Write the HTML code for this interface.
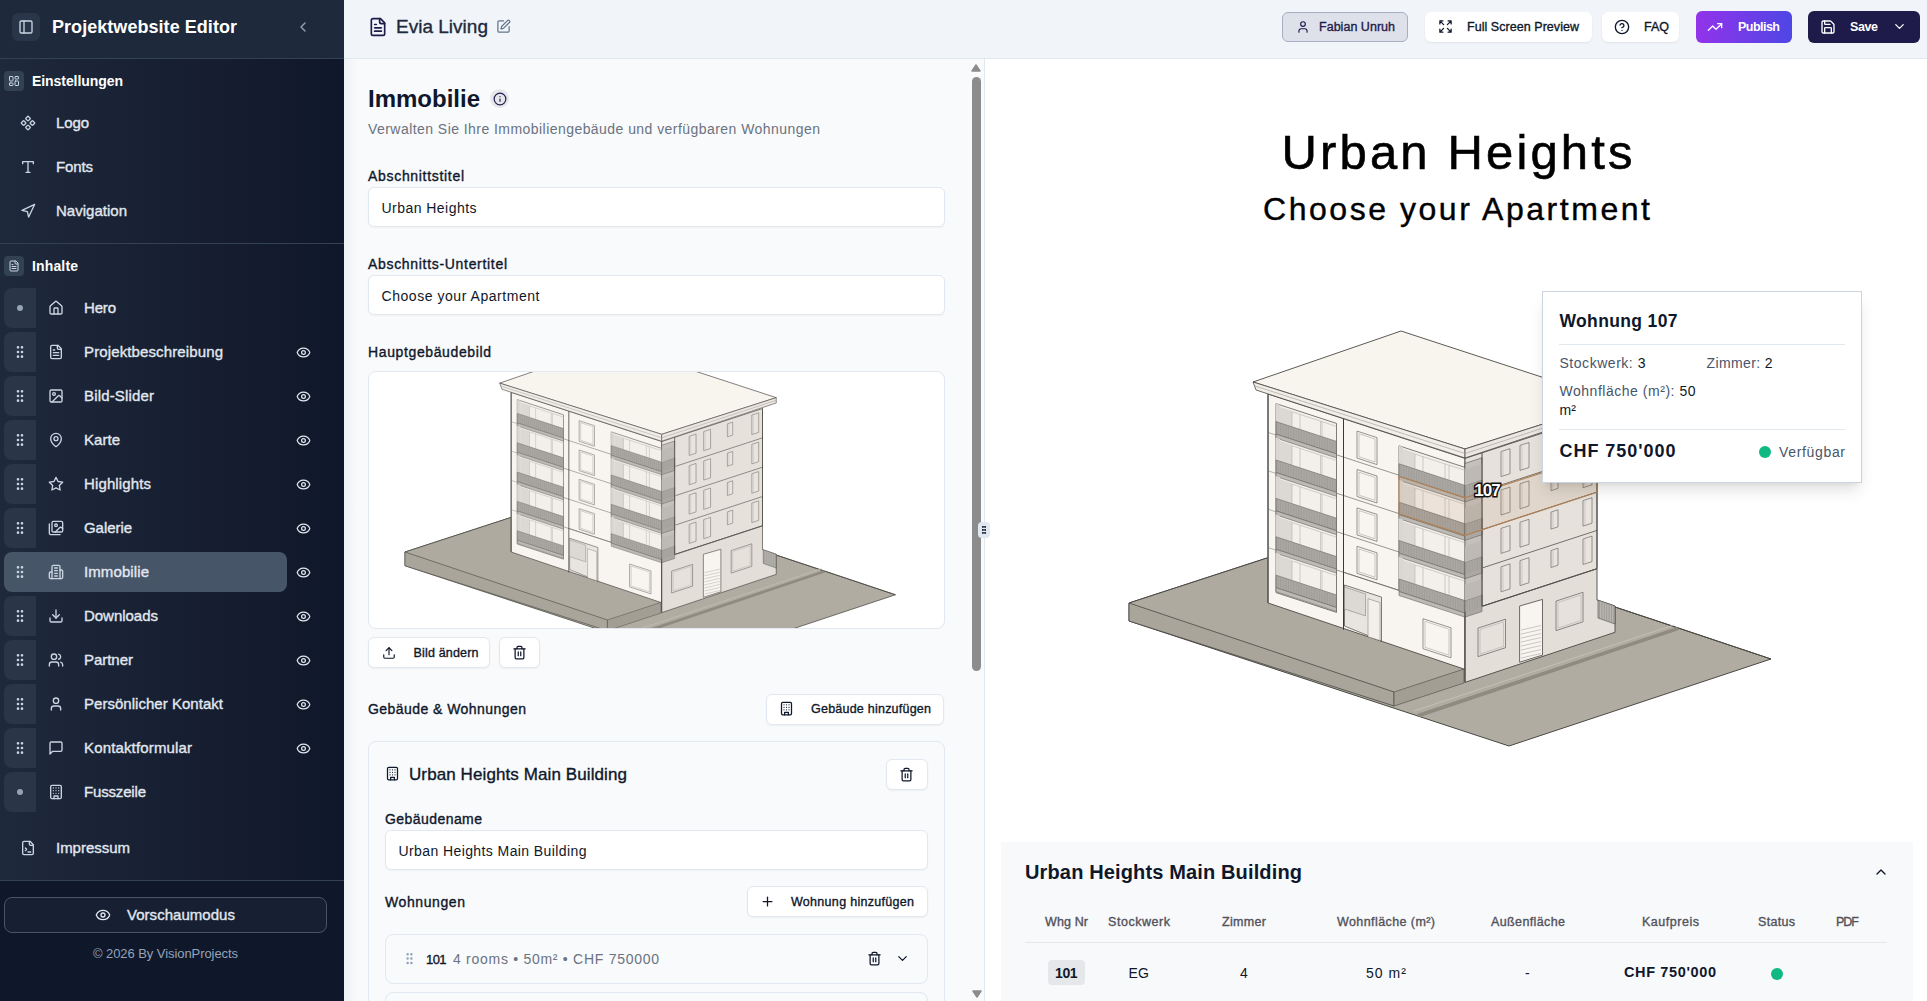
<!DOCTYPE html><html><head><meta charset="utf-8"><style>
*{box-sizing:border-box;margin:0;padding:0}
html,body{width:1927px;height:1001px;overflow:hidden;background:#fff;font-family:"Liberation Sans",sans-serif}
.t{position:absolute;white-space:nowrap}
svg{display:block}
</style></head><body>
<div style="position:absolute;left:0px;top:0px;width:344px;height:1001px;background:linear-gradient(to right,#1e293b 0%,#141c2e 70%,#0f172a 100%)"></div>
<div style="position:absolute;left:0px;top:0px;width:344px;height:59px;background:#1e293b;border-bottom:1px solid #334155"></div>
<div style="position:absolute;left:12px;top:13px;width:28px;height:28px;background:#293548;border-radius:6px"></div>
<svg style="position:absolute;left:18px;top:19px;" width="16" height="16" viewBox="0 0 24 24" fill="none" stroke="#cbd5e1" stroke-width="2" stroke-linecap="round" stroke-linejoin="round"><rect x="3" y="3" width="18" height="18" rx="2"/><path d="M9 3v18"/></svg>
<div class="t" style="left:52px;top:17.76px;font-size:18px;line-height:18px;font-weight:700;color:#ffffff;letter-spacing:0.048px;">Projektwebsite Editor</div>
<svg style="position:absolute;left:295px;top:19px;" width="16" height="16" viewBox="0 0 24 24" fill="none" stroke="#94a3b8" stroke-width="2" stroke-linecap="round" stroke-linejoin="round"><path d="m15 18-6-6 6-6"/></svg>
<div style="position:absolute;left:4px;top:71px;width:20px;height:20px;background:#334155;border-radius:4px"></div>
<svg style="position:absolute;left:8px;top:75px;" width="12" height="12" viewBox="0 0 24 24" fill="none" stroke="#cbd5e1" stroke-width="2" stroke-linecap="round" stroke-linejoin="round"><rect width="7" height="9" x="3" y="3" rx="1"/><rect width="7" height="5" x="14" y="3" rx="1"/><rect width="7" height="9" x="14" y="12" rx="1"/><rect width="7" height="5" x="3" y="16" rx="1"/></svg>
<div class="t" style="left:32px;top:74.15px;font-size:14px;line-height:14px;font-weight:700;color:#ffffff;letter-spacing:-0.066px;">Einstellungen</div>
<svg style="position:absolute;left:20px;top:115px;" width="16" height="16" viewBox="0 0 24 24" fill="none" stroke="#cbd5e1" stroke-width="2" stroke-linecap="round" stroke-linejoin="round"><path d="M15.536 11.293a1 1 0 0 0 0 1.414l2.376 2.377a1 1 0 0 0 1.414 0l2.377-2.377a1 1 0 0 0 0-1.414l-2.377-2.377a1 1 0 0 0-1.414 0z"/><path d="M2.297 11.293a1 1 0 0 0 0 1.414l2.377 2.377a1 1 0 0 0 1.414 0l2.377-2.377a1 1 0 0 0 0-1.414L6.088 8.916a1 1 0 0 0-1.414 0z"/><path d="M8.916 17.912a1 1 0 0 0 0 1.415l2.377 2.376a1 1 0 0 0 1.414 0l2.377-2.376a1 1 0 0 0 0-1.415l-2.377-2.376a1 1 0 0 0-1.414 0z"/><path d="M8.916 4.674a1 1 0 0 0 0 1.414l2.377 2.376a1 1 0 0 0 1.414 0l2.377-2.376a1 1 0 0 0 0-1.414l-2.377-2.377a1 1 0 0 0-1.414 0z"/></svg>
<div class="t" style="left:56px;top:115.30px;font-size:15px;line-height:15px;font-weight:400;color:#e2e8f0;letter-spacing:-0.125px;-webkit-text-stroke:0.35px currentColor;">Logo</div>
<svg style="position:absolute;left:20px;top:159px;" width="16" height="16" viewBox="0 0 24 24" fill="none" stroke="#cbd5e1" stroke-width="2" stroke-linecap="round" stroke-linejoin="round"><path d="M4 7V4h16v3"/><path d="M9 20h6"/><path d="M12 4v16"/></svg>
<div class="t" style="left:56px;top:159.30px;font-size:15px;line-height:15px;font-weight:400;color:#e2e8f0;letter-spacing:-0.129px;-webkit-text-stroke:0.35px currentColor;">Fonts</div>
<svg style="position:absolute;left:20px;top:203px;" width="16" height="16" viewBox="0 0 24 24" fill="none" stroke="#cbd5e1" stroke-width="2" stroke-linecap="round" stroke-linejoin="round"><polygon points="3 11 22 2 13 21 11 13 3 11"/></svg>
<div class="t" style="left:56px;top:203.30px;font-size:15px;line-height:15px;font-weight:400;color:#e2e8f0;letter-spacing:0.012px;-webkit-text-stroke:0.35px currentColor;">Navigation</div>
<div style="position:absolute;left:0px;top:243px;width:344px;height:1px;background:#334155"></div>
<div style="position:absolute;left:4px;top:256px;width:20px;height:20px;background:#334155;border-radius:4px"></div>
<svg style="position:absolute;left:8px;top:260px;" width="12" height="12" viewBox="0 0 24 24" fill="none" stroke="#cbd5e1" stroke-width="2" stroke-linecap="round" stroke-linejoin="round"><path d="M15 2H6a2 2 0 0 0-2 2v16a2 2 0 0 0 2 2h12a2 2 0 0 0 2-2V7Z"/><path d="M14 2v4a2 2 0 0 0 2 2h4"/><path d="M10 9H8"/><path d="M16 13H8"/><path d="M16 17H8"/></svg>
<div class="t" style="left:32px;top:259.15px;font-size:14px;line-height:14px;font-weight:700;color:#ffffff;letter-spacing:0.146px;">Inhalte</div>
<div style="position:absolute;left:4px;top:288px;width:32px;height:40px;background:#2a3547;border-radius:8px 0 0 8px"></div>
<div style="position:absolute;left:17px;top:305px;width:6px;height:6px;background:#94a3b8;border-radius:50%"></div>
<svg style="position:absolute;left:48px;top:300px;" width="16" height="16" viewBox="0 0 24 24" fill="none" stroke="#cbd5e1" stroke-width="2" stroke-linecap="round" stroke-linejoin="round"><path d="M15 21v-8a1 1 0 0 0-1-1h-4a1 1 0 0 0-1 1v8"/><path d="M3 10a2 2 0 0 1 .709-1.528l7-5.999a2 2 0 0 1 2.582 0l7 5.999A2 2 0 0 1 21 10v9a2 2 0 0 1-2 2H5a2 2 0 0 1-2-2z"/></svg>
<div class="t" style="left:84px;top:300.10px;font-size:15px;line-height:15px;font-weight:400;color:#e2e8f0;letter-spacing:-0.172px;-webkit-text-stroke:0.35px currentColor;">Hero</div>
<div style="position:absolute;left:4px;top:332px;width:32px;height:40px;background:#2a3547;border-radius:8px 0 0 8px"></div>
<svg style="position:absolute;left:12px;top:344px;" width="16" height="16" viewBox="0 0 24 24" fill="none" stroke="#cbd5e1" stroke-width="2" stroke-linecap="round" stroke-linejoin="round"><circle cx="9" cy="12" r="1"/><circle cx="9" cy="5" r="1"/><circle cx="9" cy="19" r="1"/><circle cx="15" cy="12" r="1"/><circle cx="15" cy="5" r="1"/><circle cx="15" cy="19" r="1"/></svg>
<svg style="position:absolute;left:48px;top:344px;" width="16" height="16" viewBox="0 0 24 24" fill="none" stroke="#cbd5e1" stroke-width="2" stroke-linecap="round" stroke-linejoin="round"><path d="M15 2H6a2 2 0 0 0-2 2v16a2 2 0 0 0 2 2h12a2 2 0 0 0 2-2V7Z"/><path d="M14 2v4a2 2 0 0 0 2 2h4"/><path d="M10 9H8"/><path d="M16 13H8"/><path d="M16 17H8"/></svg>
<div class="t" style="left:84px;top:344.10px;font-size:15px;line-height:15px;font-weight:400;color:#e2e8f0;letter-spacing:0.124px;-webkit-text-stroke:0.35px currentColor;">Projektbeschreibung</div>
<svg style="position:absolute;left:295.5px;top:344.5px;" width="15" height="15" viewBox="0 0 24 24" fill="none" stroke="#e2e8f0" stroke-width="2" stroke-linecap="round" stroke-linejoin="round"><path d="M2.062 12.348a1 1 0 0 1 0-.696 10.75 10.75 0 0 1 19.876 0 1 1 0 0 1 0 .696 10.75 10.75 0 0 1-19.876 0"/><circle cx="12" cy="12" r="3"/></svg>
<div style="position:absolute;left:4px;top:376px;width:32px;height:40px;background:#2a3547;border-radius:8px 0 0 8px"></div>
<svg style="position:absolute;left:12px;top:388px;" width="16" height="16" viewBox="0 0 24 24" fill="none" stroke="#cbd5e1" stroke-width="2" stroke-linecap="round" stroke-linejoin="round"><circle cx="9" cy="12" r="1"/><circle cx="9" cy="5" r="1"/><circle cx="9" cy="19" r="1"/><circle cx="15" cy="12" r="1"/><circle cx="15" cy="5" r="1"/><circle cx="15" cy="19" r="1"/></svg>
<svg style="position:absolute;left:48px;top:388px;" width="16" height="16" viewBox="0 0 24 24" fill="none" stroke="#cbd5e1" stroke-width="2" stroke-linecap="round" stroke-linejoin="round"><rect width="18" height="18" x="3" y="3" rx="2" ry="2"/><circle cx="9" cy="9" r="2"/><path d="m21 15-3.086-3.086a2 2 0 0 0-2.828 0L6 21"/></svg>
<div class="t" style="left:84px;top:388.10px;font-size:15px;line-height:15px;font-weight:400;color:#e2e8f0;letter-spacing:0.164px;-webkit-text-stroke:0.35px currentColor;">Bild-Slider</div>
<svg style="position:absolute;left:295.5px;top:388.5px;" width="15" height="15" viewBox="0 0 24 24" fill="none" stroke="#e2e8f0" stroke-width="2" stroke-linecap="round" stroke-linejoin="round"><path d="M2.062 12.348a1 1 0 0 1 0-.696 10.75 10.75 0 0 1 19.876 0 1 1 0 0 1 0 .696 10.75 10.75 0 0 1-19.876 0"/><circle cx="12" cy="12" r="3"/></svg>
<div style="position:absolute;left:4px;top:420px;width:32px;height:40px;background:#2a3547;border-radius:8px 0 0 8px"></div>
<svg style="position:absolute;left:12px;top:432px;" width="16" height="16" viewBox="0 0 24 24" fill="none" stroke="#cbd5e1" stroke-width="2" stroke-linecap="round" stroke-linejoin="round"><circle cx="9" cy="12" r="1"/><circle cx="9" cy="5" r="1"/><circle cx="9" cy="19" r="1"/><circle cx="15" cy="12" r="1"/><circle cx="15" cy="5" r="1"/><circle cx="15" cy="19" r="1"/></svg>
<svg style="position:absolute;left:48px;top:432px;" width="16" height="16" viewBox="0 0 24 24" fill="none" stroke="#cbd5e1" stroke-width="2" stroke-linecap="round" stroke-linejoin="round"><path d="M20 10c0 4.993-5.539 10.193-7.399 11.799a1 1 0 0 1-1.202 0C9.539 20.193 4 14.993 4 10a8 8 0 0 1 16 0"/><circle cx="12" cy="10" r="3"/></svg>
<div class="t" style="left:84px;top:432.10px;font-size:15px;line-height:15px;font-weight:400;color:#e2e8f0;letter-spacing:0.035px;-webkit-text-stroke:0.35px currentColor;">Karte</div>
<svg style="position:absolute;left:295.5px;top:432.5px;" width="15" height="15" viewBox="0 0 24 24" fill="none" stroke="#e2e8f0" stroke-width="2" stroke-linecap="round" stroke-linejoin="round"><path d="M2.062 12.348a1 1 0 0 1 0-.696 10.75 10.75 0 0 1 19.876 0 1 1 0 0 1 0 .696 10.75 10.75 0 0 1-19.876 0"/><circle cx="12" cy="12" r="3"/></svg>
<div style="position:absolute;left:4px;top:464px;width:32px;height:40px;background:#2a3547;border-radius:8px 0 0 8px"></div>
<svg style="position:absolute;left:12px;top:476px;" width="16" height="16" viewBox="0 0 24 24" fill="none" stroke="#cbd5e1" stroke-width="2" stroke-linecap="round" stroke-linejoin="round"><circle cx="9" cy="12" r="1"/><circle cx="9" cy="5" r="1"/><circle cx="9" cy="19" r="1"/><circle cx="15" cy="12" r="1"/><circle cx="15" cy="5" r="1"/><circle cx="15" cy="19" r="1"/></svg>
<svg style="position:absolute;left:48px;top:476px;" width="16" height="16" viewBox="0 0 24 24" fill="none" stroke="#cbd5e1" stroke-width="2" stroke-linecap="round" stroke-linejoin="round"><polygon points="12 2 15.09 8.26 22 9.27 17 14.14 18.18 21.02 12 17.77 5.82 21.02 7 14.14 2 9.27 8.91 8.26 12 2"/></svg>
<div class="t" style="left:84px;top:476.10px;font-size:15px;line-height:15px;font-weight:400;color:#e2e8f0;letter-spacing:0.125px;-webkit-text-stroke:0.35px currentColor;">Highlights</div>
<svg style="position:absolute;left:295.5px;top:476.5px;" width="15" height="15" viewBox="0 0 24 24" fill="none" stroke="#e2e8f0" stroke-width="2" stroke-linecap="round" stroke-linejoin="round"><path d="M2.062 12.348a1 1 0 0 1 0-.696 10.75 10.75 0 0 1 19.876 0 1 1 0 0 1 0 .696 10.75 10.75 0 0 1-19.876 0"/><circle cx="12" cy="12" r="3"/></svg>
<div style="position:absolute;left:4px;top:508px;width:32px;height:40px;background:#2a3547;border-radius:8px 0 0 8px"></div>
<svg style="position:absolute;left:12px;top:520px;" width="16" height="16" viewBox="0 0 24 24" fill="none" stroke="#cbd5e1" stroke-width="2" stroke-linecap="round" stroke-linejoin="round"><circle cx="9" cy="12" r="1"/><circle cx="9" cy="5" r="1"/><circle cx="9" cy="19" r="1"/><circle cx="15" cy="12" r="1"/><circle cx="15" cy="5" r="1"/><circle cx="15" cy="19" r="1"/></svg>
<svg style="position:absolute;left:48px;top:520px;" width="16" height="16" viewBox="0 0 24 24" fill="none" stroke="#cbd5e1" stroke-width="2" stroke-linecap="round" stroke-linejoin="round"><path d="M18 22H4a2 2 0 0 1-2-2V6"/><path d="m22 13-1.296-1.296a2.41 2.41 0 0 0-3.408 0L11 18"/><circle cx="12" cy="8" r="2"/><rect width="16" height="16" x="6" y="2" rx="2"/></svg>
<div class="t" style="left:84px;top:520.10px;font-size:15px;line-height:15px;font-weight:400;color:#e2e8f0;letter-spacing:-0.06px;-webkit-text-stroke:0.35px currentColor;">Galerie</div>
<svg style="position:absolute;left:295.5px;top:520.5px;" width="15" height="15" viewBox="0 0 24 24" fill="none" stroke="#e2e8f0" stroke-width="2" stroke-linecap="round" stroke-linejoin="round"><path d="M2.062 12.348a1 1 0 0 1 0-.696 10.75 10.75 0 0 1 19.876 0 1 1 0 0 1 0 .696 10.75 10.75 0 0 1-19.876 0"/><circle cx="12" cy="12" r="3"/></svg>
<div style="position:absolute;left:4px;top:552px;width:283px;height:40px;background:#475569;border-radius:8px"></div>
<svg style="position:absolute;left:12px;top:564px;" width="16" height="16" viewBox="0 0 24 24" fill="none" stroke="#cbd5e1" stroke-width="2" stroke-linecap="round" stroke-linejoin="round"><circle cx="9" cy="12" r="1"/><circle cx="9" cy="5" r="1"/><circle cx="9" cy="19" r="1"/><circle cx="15" cy="12" r="1"/><circle cx="15" cy="5" r="1"/><circle cx="15" cy="19" r="1"/></svg>
<svg style="position:absolute;left:48px;top:564px;" width="16" height="16" viewBox="0 0 24 24" fill="none" stroke="#cbd5e1" stroke-width="2" stroke-linecap="round" stroke-linejoin="round"><path d="M6 22V4a2 2 0 0 1 2-2h8a2 2 0 0 1 2 2v18Z"/><path d="M6 12H4a2 2 0 0 0-2 2v6a2 2 0 0 0 2 2h2"/><path d="M18 9h2a2 2 0 0 1 2 2v9a2 2 0 0 1-2 2h-2"/><path d="M10 6h4"/><path d="M10 10h4"/><path d="M10 14h4"/><path d="M10 18h4"/></svg>
<div class="t" style="left:84px;top:564.10px;font-size:15px;line-height:15px;font-weight:400;color:#e2e8f0;letter-spacing:0.102px;-webkit-text-stroke:0.35px currentColor;">Immobilie</div>
<svg style="position:absolute;left:295.5px;top:564.5px;" width="15" height="15" viewBox="0 0 24 24" fill="none" stroke="#e2e8f0" stroke-width="2" stroke-linecap="round" stroke-linejoin="round"><path d="M2.062 12.348a1 1 0 0 1 0-.696 10.75 10.75 0 0 1 19.876 0 1 1 0 0 1 0 .696 10.75 10.75 0 0 1-19.876 0"/><circle cx="12" cy="12" r="3"/></svg>
<div style="position:absolute;left:4px;top:596px;width:32px;height:40px;background:#2a3547;border-radius:8px 0 0 8px"></div>
<svg style="position:absolute;left:12px;top:608px;" width="16" height="16" viewBox="0 0 24 24" fill="none" stroke="#cbd5e1" stroke-width="2" stroke-linecap="round" stroke-linejoin="round"><circle cx="9" cy="12" r="1"/><circle cx="9" cy="5" r="1"/><circle cx="9" cy="19" r="1"/><circle cx="15" cy="12" r="1"/><circle cx="15" cy="5" r="1"/><circle cx="15" cy="19" r="1"/></svg>
<svg style="position:absolute;left:48px;top:608px;" width="16" height="16" viewBox="0 0 24 24" fill="none" stroke="#cbd5e1" stroke-width="2" stroke-linecap="round" stroke-linejoin="round"><path d="M21 15v4a2 2 0 0 1-2 2H5a2 2 0 0 1-2-2v-4"/><polyline points="7 10 12 15 17 10"/><line x1="12" x2="12" y1="15" y2="3"/></svg>
<div class="t" style="left:84px;top:608.10px;font-size:15px;line-height:15px;font-weight:400;color:#e2e8f0;letter-spacing:-0.027px;-webkit-text-stroke:0.35px currentColor;">Downloads</div>
<svg style="position:absolute;left:295.5px;top:608.5px;" width="15" height="15" viewBox="0 0 24 24" fill="none" stroke="#e2e8f0" stroke-width="2" stroke-linecap="round" stroke-linejoin="round"><path d="M2.062 12.348a1 1 0 0 1 0-.696 10.75 10.75 0 0 1 19.876 0 1 1 0 0 1 0 .696 10.75 10.75 0 0 1-19.876 0"/><circle cx="12" cy="12" r="3"/></svg>
<div style="position:absolute;left:4px;top:640px;width:32px;height:40px;background:#2a3547;border-radius:8px 0 0 8px"></div>
<svg style="position:absolute;left:12px;top:652px;" width="16" height="16" viewBox="0 0 24 24" fill="none" stroke="#cbd5e1" stroke-width="2" stroke-linecap="round" stroke-linejoin="round"><circle cx="9" cy="12" r="1"/><circle cx="9" cy="5" r="1"/><circle cx="9" cy="19" r="1"/><circle cx="15" cy="12" r="1"/><circle cx="15" cy="5" r="1"/><circle cx="15" cy="19" r="1"/></svg>
<svg style="position:absolute;left:48px;top:652px;" width="16" height="16" viewBox="0 0 24 24" fill="none" stroke="#cbd5e1" stroke-width="2" stroke-linecap="round" stroke-linejoin="round"><path d="M16 21v-2a4 4 0 0 0-4-4H6a4 4 0 0 0-4 4v2"/><circle cx="9" cy="7" r="4"/><path d="M22 21v-2a4 4 0 0 0-3-3.87"/><path d="M16 3.13a4 4 0 0 1 0 7.75"/></svg>
<div class="t" style="left:84px;top:652.10px;font-size:15px;line-height:15px;font-weight:400;color:#e2e8f0;letter-spacing:-0.034px;-webkit-text-stroke:0.35px currentColor;">Partner</div>
<svg style="position:absolute;left:295.5px;top:652.5px;" width="15" height="15" viewBox="0 0 24 24" fill="none" stroke="#e2e8f0" stroke-width="2" stroke-linecap="round" stroke-linejoin="round"><path d="M2.062 12.348a1 1 0 0 1 0-.696 10.75 10.75 0 0 1 19.876 0 1 1 0 0 1 0 .696 10.75 10.75 0 0 1-19.876 0"/><circle cx="12" cy="12" r="3"/></svg>
<div style="position:absolute;left:4px;top:684px;width:32px;height:40px;background:#2a3547;border-radius:8px 0 0 8px"></div>
<svg style="position:absolute;left:12px;top:696px;" width="16" height="16" viewBox="0 0 24 24" fill="none" stroke="#cbd5e1" stroke-width="2" stroke-linecap="round" stroke-linejoin="round"><circle cx="9" cy="12" r="1"/><circle cx="9" cy="5" r="1"/><circle cx="9" cy="19" r="1"/><circle cx="15" cy="12" r="1"/><circle cx="15" cy="5" r="1"/><circle cx="15" cy="19" r="1"/></svg>
<svg style="position:absolute;left:48px;top:696px;" width="16" height="16" viewBox="0 0 24 24" fill="none" stroke="#cbd5e1" stroke-width="2" stroke-linecap="round" stroke-linejoin="round"><path d="M19 21v-2a4 4 0 0 0-4-4H9a4 4 0 0 0-4 4v2"/><circle cx="12" cy="7" r="4"/></svg>
<div class="t" style="left:84px;top:696.10px;font-size:15px;line-height:15px;font-weight:400;color:#e2e8f0;letter-spacing:0.031px;-webkit-text-stroke:0.35px currentColor;">Persönlicher Kontakt</div>
<svg style="position:absolute;left:295.5px;top:696.5px;" width="15" height="15" viewBox="0 0 24 24" fill="none" stroke="#e2e8f0" stroke-width="2" stroke-linecap="round" stroke-linejoin="round"><path d="M2.062 12.348a1 1 0 0 1 0-.696 10.75 10.75 0 0 1 19.876 0 1 1 0 0 1 0 .696 10.75 10.75 0 0 1-19.876 0"/><circle cx="12" cy="12" r="3"/></svg>
<div style="position:absolute;left:4px;top:728px;width:32px;height:40px;background:#2a3547;border-radius:8px 0 0 8px"></div>
<svg style="position:absolute;left:12px;top:740px;" width="16" height="16" viewBox="0 0 24 24" fill="none" stroke="#cbd5e1" stroke-width="2" stroke-linecap="round" stroke-linejoin="round"><circle cx="9" cy="12" r="1"/><circle cx="9" cy="5" r="1"/><circle cx="9" cy="19" r="1"/><circle cx="15" cy="12" r="1"/><circle cx="15" cy="5" r="1"/><circle cx="15" cy="19" r="1"/></svg>
<svg style="position:absolute;left:48px;top:740px;" width="16" height="16" viewBox="0 0 24 24" fill="none" stroke="#cbd5e1" stroke-width="2" stroke-linecap="round" stroke-linejoin="round"><path d="M21 15a2 2 0 0 1-2 2H7l-4 4V5a2 2 0 0 1 2-2h14a2 2 0 0 1 2 2z"/></svg>
<div class="t" style="left:84px;top:740.10px;font-size:15px;line-height:15px;font-weight:400;color:#e2e8f0;letter-spacing:0.151px;-webkit-text-stroke:0.35px currentColor;">Kontaktformular</div>
<svg style="position:absolute;left:295.5px;top:740.5px;" width="15" height="15" viewBox="0 0 24 24" fill="none" stroke="#e2e8f0" stroke-width="2" stroke-linecap="round" stroke-linejoin="round"><path d="M2.062 12.348a1 1 0 0 1 0-.696 10.75 10.75 0 0 1 19.876 0 1 1 0 0 1 0 .696 10.75 10.75 0 0 1-19.876 0"/><circle cx="12" cy="12" r="3"/></svg>
<div style="position:absolute;left:4px;top:772px;width:32px;height:40px;background:#2a3547;border-radius:8px 0 0 8px"></div>
<div style="position:absolute;left:17px;top:789px;width:6px;height:6px;background:#94a3b8;border-radius:50%"></div>
<svg style="position:absolute;left:48px;top:784px;" width="16" height="16" viewBox="0 0 24 24" fill="none" stroke="#cbd5e1" stroke-width="2" stroke-linecap="round" stroke-linejoin="round"><rect width="16" height="20" x="4" y="2" rx="2" ry="2"/><path d="M9 22v-4h6v4"/><path d="M8 6h.01"/><path d="M16 6h.01"/><path d="M12 6h.01"/><path d="M12 10h.01"/><path d="M12 14h.01"/><path d="M16 10h.01"/><path d="M16 14h.01"/><path d="M8 10h.01"/><path d="M8 14h.01"/></svg>
<div class="t" style="left:84px;top:784.10px;font-size:15px;line-height:15px;font-weight:400;color:#e2e8f0;letter-spacing:-0.17px;-webkit-text-stroke:0.35px currentColor;">Fusszeile</div>
<svg style="position:absolute;left:20px;top:840px;" width="16" height="16" viewBox="0 0 24 24" fill="none" stroke="#cbd5e1" stroke-width="2" stroke-linecap="round" stroke-linejoin="round"><path d="M15 2H6a2 2 0 0 0-2 2v16a2 2 0 0 0 2 2h12a2 2 0 0 0 2-2V7Z"/><path d="M14 2v4a2 2 0 0 0 2 2h4"/><path d="m8 16 2-2-2-2"/><path d="M12 18h4"/></svg>
<div class="t" style="left:56px;top:840.30px;font-size:15px;line-height:15px;font-weight:400;color:#e2e8f0;letter-spacing:-0.023px;-webkit-text-stroke:0.35px currentColor;">Impressum</div>
<div style="position:absolute;left:0px;top:880px;width:344px;height:121px;background:#0f172a;border-top:1px solid #334155"></div>
<div style="position:absolute;left:4px;top:897px;width:323px;height:36px;background:#172033;border:1px solid #475569;border-radius:8px"></div>
<svg style="position:absolute;left:95px;top:907px;" width="16" height="16" viewBox="0 0 24 24" fill="none" stroke="#e2e8f0" stroke-width="2" stroke-linecap="round" stroke-linejoin="round"><path d="M2.062 12.348a1 1 0 0 1 0-.696 10.75 10.75 0 0 1 19.876 0 1 1 0 0 1 0 .696 10.75 10.75 0 0 1-19.876 0"/><circle cx="12" cy="12" r="3"/></svg>
<div class="t" style="left:127px;top:907.30px;font-size:15px;line-height:15px;font-weight:400;color:#e2e8f0;letter-spacing:0.035px;-webkit-text-stroke:0.35px currentColor;">Vorschaumodus</div>
<div class="t" style="left:93px;top:946.50px;font-size:13px;line-height:13px;font-weight:400;color:#94a3b8;letter-spacing:-0.071px;">© 2026 By VisionProjects</div>
<div style="position:absolute;left:344px;top:0px;width:1583px;height:59px;background:#f1f5f9;border-bottom:1px solid #e2e8f0"></div>
<svg style="position:absolute;left:368px;top:17px;" width="20" height="20" viewBox="0 0 24 24" fill="none" stroke="#1e1b4b" stroke-width="2" stroke-linecap="round" stroke-linejoin="round"><path d="M15 2H6a2 2 0 0 0-2 2v16a2 2 0 0 0 2 2h12a2 2 0 0 0 2-2V7Z"/><path d="M14 2v4a2 2 0 0 0 2 2h4"/><path d="M10 9H8"/><path d="M16 13H8"/><path d="M16 17H8"/></svg>
<div class="t" style="left:396px;top:17.02px;font-size:19px;line-height:19px;font-weight:400;color:#1e293b;letter-spacing:0.011px;-webkit-text-stroke:0.35px currentColor;">Evia Living</div>
<svg style="position:absolute;left:496px;top:19px;" width="15" height="15" viewBox="0 0 24 24" fill="none" stroke="#64748b" stroke-width="2" stroke-linecap="round" stroke-linejoin="round"><path d="M12 3H5a2 2 0 0 0-2 2v14a2 2 0 0 0 2 2h14a2 2 0 0 0 2-2v-7"/><path d="M18.375 2.625a1 1 0 0 1 3 3l-9.013 9.014a2 2 0 0 1-.853.505l-2.873.84a.5.5 0 0 1-.62-.62l.84-2.873a2 2 0 0 1 .506-.852z"/></svg>
<div style="position:absolute;left:1282px;top:12px;width:126px;height:30px;background:#dee1ea;border:1px solid #a9adc4;border-radius:6px"></div>
<svg style="position:absolute;left:1296px;top:20px;" width="14" height="14" viewBox="0 0 24 24" fill="none" stroke="#1e1b4b" stroke-width="2" stroke-linecap="round" stroke-linejoin="round"><path d="M19 21v-2a4 4 0 0 0-4-4H9a4 4 0 0 0-4 4v2"/><circle cx="12" cy="7" r="4"/></svg>
<div class="t" style="left:1319px;top:20.62px;font-size:12.5px;line-height:12.5px;font-weight:400;color:#1e1b4b;letter-spacing:0.023px;-webkit-text-stroke:0.35px currentColor;">Fabian Unruh</div>
<div style="position:absolute;left:1425px;top:12px;width:167px;height:30px;background:#fff;border-radius:6px;box-shadow:0 1px 2px rgba(0,0,0,.08)"></div>
<svg style="position:absolute;left:1438px;top:19px;" width="15" height="15" viewBox="0 0 24 24" fill="none" stroke="#0f172a" stroke-width="2" stroke-linecap="round" stroke-linejoin="round"><path d="m21 21-6-6m6 6v-4.8m0 4.8h-4.8"/><path d="M3 16.2V21m0 0h4.8M3 21l6-6"/><path d="M21 7.8V3m0 0h-4.8M21 3l-6 6"/><path d="M3 7.8V3m0 0h4.8M3 3l6 6"/></svg>
<div class="t" style="left:1467px;top:20.82px;font-size:12.5px;line-height:12.5px;font-weight:400;color:#0f172a;letter-spacing:0.047px;-webkit-text-stroke:0.35px currentColor;">Full Screen Preview</div>
<div style="position:absolute;left:1602px;top:12px;width:77px;height:30px;background:#fff;border-radius:6px;box-shadow:0 1px 2px rgba(0,0,0,.08)"></div>
<svg style="position:absolute;left:1614px;top:19px;" width="16" height="16" viewBox="0 0 24 24" fill="none" stroke="#0f172a" stroke-width="2" stroke-linecap="round" stroke-linejoin="round"><circle cx="12" cy="12" r="10"/><path d="M9.09 9a3 3 0 0 1 5.83 1c0 2-3 3-3 3"/><path d="M12 17h.01"/></svg>
<div class="t" style="left:1644px;top:20.82px;font-size:12.5px;line-height:12.5px;font-weight:400;color:#0f172a;letter-spacing:-0.008px;-webkit-text-stroke:0.35px currentColor;">FAQ</div>
<div style="position:absolute;left:1696px;top:11px;width:96px;height:32px;background:linear-gradient(90deg,#9333ea,#4f46e5);border-radius:6px"></div>
<svg style="position:absolute;left:1707px;top:19px;" width="16" height="16" viewBox="0 0 24 24" fill="none" stroke="#ffffff" stroke-width="2" stroke-linecap="round" stroke-linejoin="round"><polyline points="22 7 13.5 15.5 8.5 10.5 2 17"/><polyline points="16 7 22 7 22 13"/></svg>
<div class="t" style="left:1738px;top:20.82px;font-size:12.5px;line-height:12.5px;font-weight:700;color:#ffffff;letter-spacing:-0.526px;">Publish</div>
<div style="position:absolute;left:1808px;top:11px;width:112px;height:32px;background:#1e1b4b;border-radius:6px"></div>
<svg style="position:absolute;left:1820px;top:19px;" width="16" height="16" viewBox="0 0 24 24" fill="none" stroke="#ffffff" stroke-width="2" stroke-linecap="round" stroke-linejoin="round"><path d="M15.2 3a2 2 0 0 1 1.4.6l3.8 3.8a2 2 0 0 1 .6 1.4V19a2 2 0 0 1-2 2H5a2 2 0 0 1-2-2V5a2 2 0 0 1 2-2z"/><path d="M17 21v-7a1 1 0 0 0-1-1H8a1 1 0 0 0-1 1v7"/><path d="M7 3v4a1 1 0 0 0 1 1h7"/></svg>
<div class="t" style="left:1850px;top:20.82px;font-size:12.5px;line-height:12.5px;font-weight:700;color:#ffffff;letter-spacing:-0.401px;">Save</div>
<svg style="position:absolute;left:1892px;top:19px;" width="15" height="15" viewBox="0 0 24 24" fill="none" stroke="#ffffff" stroke-width="2" stroke-linecap="round" stroke-linejoin="round"><path d="m6 9 6 6 6-6"/></svg>
<div style="position:absolute;left:344px;top:59px;width:641px;height:942px;background:#f8fafc"></div>
<div style="position:absolute;left:344px;top:59px;width:14px;height:942px;background:linear-gradient(to right,rgba(15,23,42,0.04),rgba(15,23,42,0))"></div>
<div style="position:absolute;left:984px;top:59px;width:1px;height:942px;background:#e2e8f0"></div>
<svg style="position:absolute;left:970px;top:62px" width="12" height="10"><path d="M2 9 L6 3 L10 9 Z" fill="#8c8c8c" stroke="#8c8c8c" stroke-width="1.5" stroke-linejoin="round"/></svg>
<div style="position:absolute;left:972px;top:77px;width:9px;height:594px;background:#8c8c8c;border-radius:5px"></div>
<svg style="position:absolute;left:970.5px;top:988.5px" width="12" height="10"><path d="M2 2 L6 8 L10 2 Z" fill="#8c8c8c" stroke="#8c8c8c" stroke-width="1.5" stroke-linejoin="round"/></svg>
<div class="t" style="left:368px;top:87.08px;font-size:24px;line-height:24px;font-weight:700;color:#0f172a;letter-spacing:-0.004px;">Immobilie</div>
<div style="position:absolute;left:490px;top:89px;width:19px;height:19px;background:#e5e7eb;border-radius:50%"></div>
<svg style="position:absolute;left:492.5px;top:91.5px;" width="14" height="14" viewBox="0 0 24 24" fill="none" stroke="#1e1b4b" stroke-width="2" stroke-linecap="round" stroke-linejoin="round"><circle cx="12" cy="12" r="10"/><path d="M12 16v-4"/><path d="M12 8h.01"/></svg>
<div class="t" style="left:368px;top:121.75px;font-size:14px;line-height:14px;font-weight:400;color:#6b7280;letter-spacing:0.447px;">Verwalten Sie Ihre Immobiliengebäude und verfügbaren Wohnungen</div>
<div class="t" style="left:368px;top:168.85px;font-size:14px;line-height:14px;font-weight:400;color:#0f172a;letter-spacing:0.688px;-webkit-text-stroke:0.35px currentColor;">Abschnittstitel</div>
<div style="position:absolute;left:368px;top:187px;width:577px;height:40px;background:#fff;border:1px solid #e2e8f0;border-radius:6px;box-shadow:0 1px 2px rgba(0,0,0,.04)"></div>
<div class="t" style="left:381.5px;top:200.75px;font-size:14px;line-height:14px;font-weight:400;color:#0f172a;letter-spacing:0.458px;">Urban Heights</div>
<div class="t" style="left:368px;top:256.95px;font-size:14px;line-height:14px;font-weight:400;color:#0f172a;letter-spacing:0.686px;-webkit-text-stroke:0.35px currentColor;">Abschnitts-Untertitel</div>
<div style="position:absolute;left:368px;top:275px;width:577px;height:40px;background:#fff;border:1px solid #e2e8f0;border-radius:6px;box-shadow:0 1px 2px rgba(0,0,0,.04)"></div>
<div class="t" style="left:381.5px;top:288.85px;font-size:14px;line-height:14px;font-weight:400;color:#0f172a;letter-spacing:0.545px;">Choose your Apartment</div>
<div class="t" style="left:368px;top:345.05px;font-size:14px;line-height:14px;font-weight:400;color:#0f172a;letter-spacing:0.623px;-webkit-text-stroke:0.35px currentColor;">Hauptgebäudebild</div>
<div style="position:absolute;left:368px;top:371px;width:577px;height:258px;background:#fff;border:1px solid #e2e8f0;border-radius:8px"></div>
<div style="position:absolute;left:369px;top:372px;width:575px;height:256px;overflow:hidden;border-radius:7px"><svg style="position:absolute;left:-369px;top:-372px" width="1927" height="1001" viewBox="0 0 1927 1001"><g transform="translate(-457.6 91.3) scale(0.764)"><polygon points="1129.0,621.0 1509.0,746.0 1771.0,659.0 1615.0,607.0 1401.0,537.0 1267.0,558.0 1129.0,603.0" fill="#b0aca1" stroke="#4a4845" stroke-width="1" stroke-linejoin="round" />
<polygon points="1129.0,603.0 1267.0,558.0 1465.0,620.0 1464.0,669.0 1394.0,692.0" fill="#aeaa9f" stroke="none" stroke-width="0.8" stroke-linejoin="round" />
<line x1="1129.0" y1="603.0" x2="1267.0" y2="558.0" stroke="#4a4845" stroke-width="1"/>
<polygon points="1129.0,603.0 1394.0,692.0 1394.0,706.0 1129.0,621.0" fill="#a9a59a" stroke="#4a4845" stroke-width="0.8" stroke-linejoin="round" />
<polygon points="1394.0,692.0 1464.0,669.0 1464.0,683.0 1394.0,706.0" fill="#a29e93" stroke="#4a4845" stroke-width="0.6" stroke-linejoin="round" />
<line x1="1615.0" y1="607.0" x2="1677.0" y2="627.5" stroke="#4a4845" stroke-width="1"/>
<line x1="1677.0" y1="627.5" x2="1771.0" y2="659.0" stroke="#4a4845" stroke-width="1"/>
<polygon points="1417.0,714.0 1677.0,627.0 1679.0,630.0 1420.0,717.0" fill="#8f8b81" stroke="none" stroke-width="0.8" stroke-linejoin="round" />
<line x1="1414.0" y1="711.0" x2="1674.0" y2="625.0" stroke="#c4c0b6" stroke-width="1"/>
<polygon points="1268.0,394.0 1465.0,458.4 1465.0,669.4 1268.0,603.0" fill="#f8f5f0" stroke="#4a4845" stroke-width="0.9" stroke-linejoin="round" />
<polygon points="1465.0,458.4 1597.0,415.2 1597.0,568.7 1465.0,611.9" fill="#e6e1db" stroke="#4a4845" stroke-width="0.9" stroke-linejoin="round" />
<polygon points="1465.0,611.9 1597.0,568.7 1597.0,600.0 1615.0,606.0 1615.0,632.3 1465.0,682.4" fill="#e3ded8" stroke="#4a4845" stroke-width="0.9" stroke-linejoin="round" />
<polygon points="1598.0,600.0 1615.0,606.0 1615.0,624.0 1598.0,618.0" fill="#b8b5b1" stroke="#4a4845" stroke-width="0.6" stroke-linejoin="round" />
<line x1="1599.5" y1="601.0" x2="1599.5" y2="618.0" stroke="#85827e" stroke-width="0.5"/>
<line x1="1601.9" y1="601.9" x2="1601.9" y2="618.9" stroke="#85827e" stroke-width="0.5"/>
<line x1="1604.3" y1="602.7" x2="1604.3" y2="619.7" stroke="#85827e" stroke-width="0.5"/>
<line x1="1606.7" y1="603.5" x2="1606.7" y2="620.5" stroke="#85827e" stroke-width="0.5"/>
<line x1="1609.1" y1="604.4" x2="1609.1" y2="621.4" stroke="#85827e" stroke-width="0.5"/>
<line x1="1611.5" y1="605.2" x2="1611.5" y2="622.2" stroke="#85827e" stroke-width="0.5"/>
<line x1="1613.9" y1="606.1" x2="1613.9" y2="623.1" stroke="#85827e" stroke-width="0.5"/>
<line x1="1268.0" y1="432.4" x2="1276.0" y2="435.0" stroke="#9a9794" stroke-width="0.7"/>
<line x1="1336.5" y1="454.8" x2="1399.0" y2="475.2" stroke="#6f6c69" stroke-width="0.7"/>
<line x1="1268.0" y1="470.8" x2="1276.0" y2="473.4" stroke="#9a9794" stroke-width="0.7"/>
<line x1="1336.5" y1="493.2" x2="1399.0" y2="513.6" stroke="#6f6c69" stroke-width="0.7"/>
<line x1="1268.0" y1="509.2" x2="1276.0" y2="511.8" stroke="#9a9794" stroke-width="0.7"/>
<line x1="1336.5" y1="531.6" x2="1399.0" y2="552.0" stroke="#6f6c69" stroke-width="0.7"/>
<line x1="1268.0" y1="547.6" x2="1276.0" y2="550.2" stroke="#9a9794" stroke-width="0.7"/>
<line x1="1336.5" y1="570.0" x2="1399.0" y2="590.4" stroke="#6f6c69" stroke-width="0.7"/>
<line x1="1268.0" y1="394.0" x2="1268.0" y2="603.0" stroke="#4a4845" stroke-width="1"/>
<line x1="1343.5" y1="572.2" x2="1465.0" y2="611.9" stroke="#6f6c69" stroke-width="0.8"/>
<polygon points="1276.0,403.6 1336.5,423.4 1336.5,612.4 1276.0,592.6" fill="#f3efea" stroke="#4a4845" stroke-width="0.7" stroke-linejoin="round" />
<polygon points="1276.0,403.6 1280.0,404.9 1280.0,422.9 1276.0,421.6" fill="#dad6d1" stroke="none" stroke-width="0.8" stroke-linejoin="round" />
<polygon points="1280.0,406.9 1292.0,410.8 1292.0,426.8 1280.0,422.9" fill="#dcd8d3" stroke="none" stroke-width="0.8" stroke-linejoin="round" />
<line x1="1292.0" y1="411.8" x2="1292.0" y2="426.8" stroke="#b5b2ae" stroke-width="0.6"/>
<line x1="1300.0" y1="414.5" x2="1300.0" y2="429.5" stroke="#b5b2ae" stroke-width="0.6"/>
<line x1="1322.0" y1="421.7" x2="1322.0" y2="436.7" stroke="#b5b2ae" stroke-width="0.6"/>
<line x1="1320.5" y1="421.2" x2="1320.5" y2="436.2" stroke="#b5b2ae" stroke-width="0.6"/>
<line x1="1292.0" y1="411.8" x2="1336.5" y2="426.4" stroke="#b5b2ae" stroke-width="0.6"/>
<polygon points="1276.0,421.6 1336.5,441.4 1336.5,453.9 1276.0,434.1" fill="#aba8a4" stroke="#66635f" stroke-width="0.6" stroke-linejoin="round" />
<line x1="1278.0" y1="423.3" x2="1278.0" y2="433.8" stroke="#918e8a" stroke-width="0.4"/>
<line x1="1280.6" y1="424.1" x2="1280.6" y2="434.6" stroke="#918e8a" stroke-width="0.4"/>
<line x1="1283.2" y1="425.0" x2="1283.2" y2="435.5" stroke="#918e8a" stroke-width="0.4"/>
<line x1="1285.8" y1="425.8" x2="1285.8" y2="436.3" stroke="#918e8a" stroke-width="0.4"/>
<line x1="1288.4" y1="426.7" x2="1288.4" y2="437.2" stroke="#918e8a" stroke-width="0.4"/>
<line x1="1291.0" y1="427.5" x2="1291.0" y2="438.0" stroke="#918e8a" stroke-width="0.4"/>
<line x1="1293.6" y1="428.4" x2="1293.6" y2="438.9" stroke="#918e8a" stroke-width="0.4"/>
<line x1="1296.2" y1="429.2" x2="1296.2" y2="439.7" stroke="#918e8a" stroke-width="0.4"/>
<line x1="1298.8" y1="430.1" x2="1298.8" y2="440.6" stroke="#918e8a" stroke-width="0.4"/>
<line x1="1301.4" y1="430.9" x2="1301.4" y2="441.4" stroke="#918e8a" stroke-width="0.4"/>
<line x1="1304.0" y1="431.8" x2="1304.0" y2="442.3" stroke="#918e8a" stroke-width="0.4"/>
<line x1="1306.6" y1="432.6" x2="1306.6" y2="443.1" stroke="#918e8a" stroke-width="0.4"/>
<line x1="1309.2" y1="433.5" x2="1309.2" y2="444.0" stroke="#918e8a" stroke-width="0.4"/>
<line x1="1311.8" y1="434.3" x2="1311.8" y2="444.8" stroke="#918e8a" stroke-width="0.4"/>
<line x1="1314.4" y1="435.2" x2="1314.4" y2="445.7" stroke="#918e8a" stroke-width="0.4"/>
<line x1="1317.0" y1="436.0" x2="1317.0" y2="446.5" stroke="#918e8a" stroke-width="0.4"/>
<line x1="1319.6" y1="436.9" x2="1319.6" y2="447.4" stroke="#918e8a" stroke-width="0.4"/>
<line x1="1322.2" y1="437.7" x2="1322.2" y2="448.2" stroke="#918e8a" stroke-width="0.4"/>
<line x1="1324.8" y1="438.6" x2="1324.8" y2="449.1" stroke="#918e8a" stroke-width="0.4"/>
<line x1="1327.4" y1="439.4" x2="1327.4" y2="449.9" stroke="#918e8a" stroke-width="0.4"/>
<line x1="1330.0" y1="440.3" x2="1330.0" y2="450.8" stroke="#918e8a" stroke-width="0.4"/>
<line x1="1332.6" y1="441.1" x2="1332.6" y2="451.6" stroke="#918e8a" stroke-width="0.4"/>
<line x1="1335.2" y1="442.0" x2="1335.2" y2="452.5" stroke="#918e8a" stroke-width="0.4"/>
<polygon points="1276.0,434.1 1336.5,453.9 1336.5,457.9 1276.0,438.1" fill="#bdbab6" stroke="#66635f" stroke-width="0.6" stroke-linejoin="round" />
<polygon points="1276.0,437.6 1280.0,438.9 1280.0,461.3 1276.0,460.0" fill="#dad6d1" stroke="none" stroke-width="0.8" stroke-linejoin="round" />
<polygon points="1280.0,440.9 1292.0,444.8 1292.0,465.2 1280.0,461.3" fill="#dcd8d3" stroke="none" stroke-width="0.8" stroke-linejoin="round" />
<line x1="1292.0" y1="445.8" x2="1292.0" y2="465.2" stroke="#b5b2ae" stroke-width="0.6"/>
<line x1="1300.0" y1="448.5" x2="1300.0" y2="467.9" stroke="#b5b2ae" stroke-width="0.6"/>
<line x1="1322.0" y1="455.7" x2="1322.0" y2="475.1" stroke="#b5b2ae" stroke-width="0.6"/>
<line x1="1320.5" y1="455.2" x2="1320.5" y2="474.6" stroke="#b5b2ae" stroke-width="0.6"/>
<line x1="1292.0" y1="445.8" x2="1336.5" y2="460.4" stroke="#b5b2ae" stroke-width="0.6"/>
<polygon points="1276.0,460.0 1336.5,479.8 1336.5,492.3 1276.0,472.5" fill="#aba8a4" stroke="#66635f" stroke-width="0.6" stroke-linejoin="round" />
<line x1="1278.0" y1="461.7" x2="1278.0" y2="472.2" stroke="#918e8a" stroke-width="0.4"/>
<line x1="1280.6" y1="462.5" x2="1280.6" y2="473.0" stroke="#918e8a" stroke-width="0.4"/>
<line x1="1283.2" y1="463.4" x2="1283.2" y2="473.9" stroke="#918e8a" stroke-width="0.4"/>
<line x1="1285.8" y1="464.2" x2="1285.8" y2="474.7" stroke="#918e8a" stroke-width="0.4"/>
<line x1="1288.4" y1="465.1" x2="1288.4" y2="475.6" stroke="#918e8a" stroke-width="0.4"/>
<line x1="1291.0" y1="465.9" x2="1291.0" y2="476.4" stroke="#918e8a" stroke-width="0.4"/>
<line x1="1293.6" y1="466.8" x2="1293.6" y2="477.3" stroke="#918e8a" stroke-width="0.4"/>
<line x1="1296.2" y1="467.6" x2="1296.2" y2="478.1" stroke="#918e8a" stroke-width="0.4"/>
<line x1="1298.8" y1="468.5" x2="1298.8" y2="479.0" stroke="#918e8a" stroke-width="0.4"/>
<line x1="1301.4" y1="469.3" x2="1301.4" y2="479.8" stroke="#918e8a" stroke-width="0.4"/>
<line x1="1304.0" y1="470.2" x2="1304.0" y2="480.7" stroke="#918e8a" stroke-width="0.4"/>
<line x1="1306.6" y1="471.0" x2="1306.6" y2="481.5" stroke="#918e8a" stroke-width="0.4"/>
<line x1="1309.2" y1="471.9" x2="1309.2" y2="482.4" stroke="#918e8a" stroke-width="0.4"/>
<line x1="1311.8" y1="472.7" x2="1311.8" y2="483.2" stroke="#918e8a" stroke-width="0.4"/>
<line x1="1314.4" y1="473.6" x2="1314.4" y2="484.1" stroke="#918e8a" stroke-width="0.4"/>
<line x1="1317.0" y1="474.4" x2="1317.0" y2="484.9" stroke="#918e8a" stroke-width="0.4"/>
<line x1="1319.6" y1="475.3" x2="1319.6" y2="485.8" stroke="#918e8a" stroke-width="0.4"/>
<line x1="1322.2" y1="476.1" x2="1322.2" y2="486.6" stroke="#918e8a" stroke-width="0.4"/>
<line x1="1324.8" y1="477.0" x2="1324.8" y2="487.5" stroke="#918e8a" stroke-width="0.4"/>
<line x1="1327.4" y1="477.8" x2="1327.4" y2="488.3" stroke="#918e8a" stroke-width="0.4"/>
<line x1="1330.0" y1="478.7" x2="1330.0" y2="489.2" stroke="#918e8a" stroke-width="0.4"/>
<line x1="1332.6" y1="479.5" x2="1332.6" y2="490.0" stroke="#918e8a" stroke-width="0.4"/>
<line x1="1335.2" y1="480.4" x2="1335.2" y2="490.9" stroke="#918e8a" stroke-width="0.4"/>
<polygon points="1276.0,472.5 1336.5,492.3 1336.5,496.3 1276.0,476.5" fill="#bdbab6" stroke="#66635f" stroke-width="0.6" stroke-linejoin="round" />
<polygon points="1276.0,476.0 1280.0,477.3 1280.0,499.7 1276.0,498.4" fill="#dad6d1" stroke="none" stroke-width="0.8" stroke-linejoin="round" />
<polygon points="1280.0,479.3 1292.0,483.2 1292.0,503.6 1280.0,499.7" fill="#dcd8d3" stroke="none" stroke-width="0.8" stroke-linejoin="round" />
<line x1="1292.0" y1="484.2" x2="1292.0" y2="503.6" stroke="#b5b2ae" stroke-width="0.6"/>
<line x1="1300.0" y1="486.9" x2="1300.0" y2="506.3" stroke="#b5b2ae" stroke-width="0.6"/>
<line x1="1322.0" y1="494.1" x2="1322.0" y2="513.5" stroke="#b5b2ae" stroke-width="0.6"/>
<line x1="1320.5" y1="493.6" x2="1320.5" y2="513.0" stroke="#b5b2ae" stroke-width="0.6"/>
<line x1="1292.0" y1="484.2" x2="1336.5" y2="498.8" stroke="#b5b2ae" stroke-width="0.6"/>
<polygon points="1276.0,498.4 1336.5,518.2 1336.5,530.7 1276.0,510.9" fill="#aba8a4" stroke="#66635f" stroke-width="0.6" stroke-linejoin="round" />
<line x1="1278.0" y1="500.1" x2="1278.0" y2="510.6" stroke="#918e8a" stroke-width="0.4"/>
<line x1="1280.6" y1="500.9" x2="1280.6" y2="511.4" stroke="#918e8a" stroke-width="0.4"/>
<line x1="1283.2" y1="501.8" x2="1283.2" y2="512.3" stroke="#918e8a" stroke-width="0.4"/>
<line x1="1285.8" y1="502.6" x2="1285.8" y2="513.1" stroke="#918e8a" stroke-width="0.4"/>
<line x1="1288.4" y1="503.5" x2="1288.4" y2="514.0" stroke="#918e8a" stroke-width="0.4"/>
<line x1="1291.0" y1="504.3" x2="1291.0" y2="514.8" stroke="#918e8a" stroke-width="0.4"/>
<line x1="1293.6" y1="505.2" x2="1293.6" y2="515.7" stroke="#918e8a" stroke-width="0.4"/>
<line x1="1296.2" y1="506.0" x2="1296.2" y2="516.5" stroke="#918e8a" stroke-width="0.4"/>
<line x1="1298.8" y1="506.9" x2="1298.8" y2="517.4" stroke="#918e8a" stroke-width="0.4"/>
<line x1="1301.4" y1="507.7" x2="1301.4" y2="518.2" stroke="#918e8a" stroke-width="0.4"/>
<line x1="1304.0" y1="508.6" x2="1304.0" y2="519.1" stroke="#918e8a" stroke-width="0.4"/>
<line x1="1306.6" y1="509.4" x2="1306.6" y2="519.9" stroke="#918e8a" stroke-width="0.4"/>
<line x1="1309.2" y1="510.3" x2="1309.2" y2="520.8" stroke="#918e8a" stroke-width="0.4"/>
<line x1="1311.8" y1="511.1" x2="1311.8" y2="521.6" stroke="#918e8a" stroke-width="0.4"/>
<line x1="1314.4" y1="512.0" x2="1314.4" y2="522.5" stroke="#918e8a" stroke-width="0.4"/>
<line x1="1317.0" y1="512.8" x2="1317.0" y2="523.3" stroke="#918e8a" stroke-width="0.4"/>
<line x1="1319.6" y1="513.7" x2="1319.6" y2="524.2" stroke="#918e8a" stroke-width="0.4"/>
<line x1="1322.2" y1="514.5" x2="1322.2" y2="525.0" stroke="#918e8a" stroke-width="0.4"/>
<line x1="1324.8" y1="515.4" x2="1324.8" y2="525.9" stroke="#918e8a" stroke-width="0.4"/>
<line x1="1327.4" y1="516.2" x2="1327.4" y2="526.7" stroke="#918e8a" stroke-width="0.4"/>
<line x1="1330.0" y1="517.1" x2="1330.0" y2="527.6" stroke="#918e8a" stroke-width="0.4"/>
<line x1="1332.6" y1="517.9" x2="1332.6" y2="528.4" stroke="#918e8a" stroke-width="0.4"/>
<line x1="1335.2" y1="518.8" x2="1335.2" y2="529.3" stroke="#918e8a" stroke-width="0.4"/>
<polygon points="1276.0,510.9 1336.5,530.7 1336.5,534.7 1276.0,514.9" fill="#bdbab6" stroke="#66635f" stroke-width="0.6" stroke-linejoin="round" />
<polygon points="1276.0,514.4 1280.0,515.7 1280.0,538.1 1276.0,536.8" fill="#dad6d1" stroke="none" stroke-width="0.8" stroke-linejoin="round" />
<polygon points="1280.0,517.7 1292.0,521.6 1292.0,542.0 1280.0,538.1" fill="#dcd8d3" stroke="none" stroke-width="0.8" stroke-linejoin="round" />
<line x1="1292.0" y1="522.6" x2="1292.0" y2="542.0" stroke="#b5b2ae" stroke-width="0.6"/>
<line x1="1300.0" y1="525.3" x2="1300.0" y2="544.7" stroke="#b5b2ae" stroke-width="0.6"/>
<line x1="1322.0" y1="532.5" x2="1322.0" y2="551.9" stroke="#b5b2ae" stroke-width="0.6"/>
<line x1="1320.5" y1="532.0" x2="1320.5" y2="551.4" stroke="#b5b2ae" stroke-width="0.6"/>
<line x1="1292.0" y1="522.6" x2="1336.5" y2="537.2" stroke="#b5b2ae" stroke-width="0.6"/>
<polygon points="1276.0,536.8 1336.5,556.6 1336.5,569.1 1276.0,549.3" fill="#aba8a4" stroke="#66635f" stroke-width="0.6" stroke-linejoin="round" />
<line x1="1278.0" y1="538.5" x2="1278.0" y2="549.0" stroke="#918e8a" stroke-width="0.4"/>
<line x1="1280.6" y1="539.3" x2="1280.6" y2="549.8" stroke="#918e8a" stroke-width="0.4"/>
<line x1="1283.2" y1="540.2" x2="1283.2" y2="550.7" stroke="#918e8a" stroke-width="0.4"/>
<line x1="1285.8" y1="541.0" x2="1285.8" y2="551.5" stroke="#918e8a" stroke-width="0.4"/>
<line x1="1288.4" y1="541.9" x2="1288.4" y2="552.4" stroke="#918e8a" stroke-width="0.4"/>
<line x1="1291.0" y1="542.7" x2="1291.0" y2="553.2" stroke="#918e8a" stroke-width="0.4"/>
<line x1="1293.6" y1="543.6" x2="1293.6" y2="554.1" stroke="#918e8a" stroke-width="0.4"/>
<line x1="1296.2" y1="544.4" x2="1296.2" y2="554.9" stroke="#918e8a" stroke-width="0.4"/>
<line x1="1298.8" y1="545.3" x2="1298.8" y2="555.8" stroke="#918e8a" stroke-width="0.4"/>
<line x1="1301.4" y1="546.1" x2="1301.4" y2="556.6" stroke="#918e8a" stroke-width="0.4"/>
<line x1="1304.0" y1="547.0" x2="1304.0" y2="557.5" stroke="#918e8a" stroke-width="0.4"/>
<line x1="1306.6" y1="547.8" x2="1306.6" y2="558.3" stroke="#918e8a" stroke-width="0.4"/>
<line x1="1309.2" y1="548.7" x2="1309.2" y2="559.2" stroke="#918e8a" stroke-width="0.4"/>
<line x1="1311.8" y1="549.5" x2="1311.8" y2="560.0" stroke="#918e8a" stroke-width="0.4"/>
<line x1="1314.4" y1="550.4" x2="1314.4" y2="560.9" stroke="#918e8a" stroke-width="0.4"/>
<line x1="1317.0" y1="551.2" x2="1317.0" y2="561.7" stroke="#918e8a" stroke-width="0.4"/>
<line x1="1319.6" y1="552.1" x2="1319.6" y2="562.6" stroke="#918e8a" stroke-width="0.4"/>
<line x1="1322.2" y1="552.9" x2="1322.2" y2="563.4" stroke="#918e8a" stroke-width="0.4"/>
<line x1="1324.8" y1="553.8" x2="1324.8" y2="564.3" stroke="#918e8a" stroke-width="0.4"/>
<line x1="1327.4" y1="554.6" x2="1327.4" y2="565.1" stroke="#918e8a" stroke-width="0.4"/>
<line x1="1330.0" y1="555.5" x2="1330.0" y2="566.0" stroke="#918e8a" stroke-width="0.4"/>
<line x1="1332.6" y1="556.3" x2="1332.6" y2="566.8" stroke="#918e8a" stroke-width="0.4"/>
<line x1="1335.2" y1="557.2" x2="1335.2" y2="567.7" stroke="#918e8a" stroke-width="0.4"/>
<polygon points="1276.0,549.3 1336.5,569.1 1336.5,573.1 1276.0,553.3" fill="#bdbab6" stroke="#66635f" stroke-width="0.6" stroke-linejoin="round" />
<polygon points="1276.0,552.8 1280.0,554.1 1280.0,576.5 1276.0,575.2" fill="#dad6d1" stroke="none" stroke-width="0.8" stroke-linejoin="round" />
<polygon points="1280.0,556.1 1292.0,560.0 1292.0,580.4 1280.0,576.5" fill="#dcd8d3" stroke="none" stroke-width="0.8" stroke-linejoin="round" />
<line x1="1292.0" y1="561.0" x2="1292.0" y2="580.4" stroke="#b5b2ae" stroke-width="0.6"/>
<line x1="1300.0" y1="563.7" x2="1300.0" y2="583.1" stroke="#b5b2ae" stroke-width="0.6"/>
<line x1="1322.0" y1="570.9" x2="1322.0" y2="590.3" stroke="#b5b2ae" stroke-width="0.6"/>
<line x1="1320.5" y1="570.4" x2="1320.5" y2="589.8" stroke="#b5b2ae" stroke-width="0.6"/>
<line x1="1292.0" y1="561.0" x2="1336.5" y2="575.6" stroke="#b5b2ae" stroke-width="0.6"/>
<polygon points="1276.0,575.2 1336.5,595.0 1336.5,607.5 1276.0,587.7" fill="#aba8a4" stroke="#66635f" stroke-width="0.6" stroke-linejoin="round" />
<line x1="1278.0" y1="576.9" x2="1278.0" y2="587.4" stroke="#918e8a" stroke-width="0.4"/>
<line x1="1280.6" y1="577.7" x2="1280.6" y2="588.2" stroke="#918e8a" stroke-width="0.4"/>
<line x1="1283.2" y1="578.6" x2="1283.2" y2="589.1" stroke="#918e8a" stroke-width="0.4"/>
<line x1="1285.8" y1="579.4" x2="1285.8" y2="589.9" stroke="#918e8a" stroke-width="0.4"/>
<line x1="1288.4" y1="580.3" x2="1288.4" y2="590.8" stroke="#918e8a" stroke-width="0.4"/>
<line x1="1291.0" y1="581.1" x2="1291.0" y2="591.6" stroke="#918e8a" stroke-width="0.4"/>
<line x1="1293.6" y1="582.0" x2="1293.6" y2="592.5" stroke="#918e8a" stroke-width="0.4"/>
<line x1="1296.2" y1="582.8" x2="1296.2" y2="593.3" stroke="#918e8a" stroke-width="0.4"/>
<line x1="1298.8" y1="583.7" x2="1298.8" y2="594.2" stroke="#918e8a" stroke-width="0.4"/>
<line x1="1301.4" y1="584.5" x2="1301.4" y2="595.0" stroke="#918e8a" stroke-width="0.4"/>
<line x1="1304.0" y1="585.4" x2="1304.0" y2="595.9" stroke="#918e8a" stroke-width="0.4"/>
<line x1="1306.6" y1="586.2" x2="1306.6" y2="596.7" stroke="#918e8a" stroke-width="0.4"/>
<line x1="1309.2" y1="587.1" x2="1309.2" y2="597.6" stroke="#918e8a" stroke-width="0.4"/>
<line x1="1311.8" y1="587.9" x2="1311.8" y2="598.4" stroke="#918e8a" stroke-width="0.4"/>
<line x1="1314.4" y1="588.8" x2="1314.4" y2="599.3" stroke="#918e8a" stroke-width="0.4"/>
<line x1="1317.0" y1="589.6" x2="1317.0" y2="600.1" stroke="#918e8a" stroke-width="0.4"/>
<line x1="1319.6" y1="590.5" x2="1319.6" y2="601.0" stroke="#918e8a" stroke-width="0.4"/>
<line x1="1322.2" y1="591.3" x2="1322.2" y2="601.8" stroke="#918e8a" stroke-width="0.4"/>
<line x1="1324.8" y1="592.2" x2="1324.8" y2="602.7" stroke="#918e8a" stroke-width="0.4"/>
<line x1="1327.4" y1="593.0" x2="1327.4" y2="603.5" stroke="#918e8a" stroke-width="0.4"/>
<line x1="1330.0" y1="593.9" x2="1330.0" y2="604.4" stroke="#918e8a" stroke-width="0.4"/>
<line x1="1332.6" y1="594.7" x2="1332.6" y2="605.2" stroke="#918e8a" stroke-width="0.4"/>
<line x1="1335.2" y1="595.6" x2="1335.2" y2="606.1" stroke="#918e8a" stroke-width="0.4"/>
<polygon points="1276.0,587.7 1336.5,607.5 1336.5,611.5 1276.0,591.7" fill="#bdbab6" stroke="#66635f" stroke-width="0.6" stroke-linejoin="round" />
<polygon points="1399.0,445.8 1465.0,467.4 1465.0,611.9 1399.0,590.3" fill="#f3efea" stroke="#4a4845" stroke-width="0.7" stroke-linejoin="round" />
<polygon points="1399.0,445.8 1403.0,447.1 1403.0,465.1 1399.0,463.8" fill="#dad6d1" stroke="none" stroke-width="0.8" stroke-linejoin="round" />
<polygon points="1403.0,449.1 1415.0,453.1 1415.0,469.1 1403.0,465.1" fill="#dcd8d3" stroke="none" stroke-width="0.8" stroke-linejoin="round" />
<line x1="1415.0" y1="454.1" x2="1415.0" y2="469.1" stroke="#b5b2ae" stroke-width="0.6"/>
<line x1="1423.0" y1="456.7" x2="1423.0" y2="471.7" stroke="#b5b2ae" stroke-width="0.6"/>
<line x1="1445.0" y1="463.9" x2="1445.0" y2="478.9" stroke="#b5b2ae" stroke-width="0.6"/>
<line x1="1449.0" y1="465.2" x2="1449.0" y2="480.2" stroke="#b5b2ae" stroke-width="0.6"/>
<line x1="1415.0" y1="454.1" x2="1465.0" y2="470.4" stroke="#b5b2ae" stroke-width="0.6"/>
<polygon points="1399.0,463.8 1465.0,485.4 1465.0,497.9 1399.0,476.3" fill="#aba8a4" stroke="#66635f" stroke-width="0.6" stroke-linejoin="round" />
<line x1="1401.0" y1="465.5" x2="1401.0" y2="476.0" stroke="#918e8a" stroke-width="0.4"/>
<line x1="1403.6" y1="466.3" x2="1403.6" y2="476.8" stroke="#918e8a" stroke-width="0.4"/>
<line x1="1406.2" y1="467.2" x2="1406.2" y2="477.7" stroke="#918e8a" stroke-width="0.4"/>
<line x1="1408.8" y1="468.0" x2="1408.8" y2="478.5" stroke="#918e8a" stroke-width="0.4"/>
<line x1="1411.4" y1="468.9" x2="1411.4" y2="479.4" stroke="#918e8a" stroke-width="0.4"/>
<line x1="1414.0" y1="469.7" x2="1414.0" y2="480.2" stroke="#918e8a" stroke-width="0.4"/>
<line x1="1416.6" y1="470.6" x2="1416.6" y2="481.1" stroke="#918e8a" stroke-width="0.4"/>
<line x1="1419.2" y1="471.4" x2="1419.2" y2="481.9" stroke="#918e8a" stroke-width="0.4"/>
<line x1="1421.8" y1="472.3" x2="1421.8" y2="482.8" stroke="#918e8a" stroke-width="0.4"/>
<line x1="1424.4" y1="473.1" x2="1424.4" y2="483.6" stroke="#918e8a" stroke-width="0.4"/>
<line x1="1427.0" y1="474.0" x2="1427.0" y2="484.5" stroke="#918e8a" stroke-width="0.4"/>
<line x1="1429.6" y1="474.8" x2="1429.6" y2="485.3" stroke="#918e8a" stroke-width="0.4"/>
<line x1="1432.2" y1="475.7" x2="1432.2" y2="486.2" stroke="#918e8a" stroke-width="0.4"/>
<line x1="1434.8" y1="476.5" x2="1434.8" y2="487.0" stroke="#918e8a" stroke-width="0.4"/>
<line x1="1437.4" y1="477.4" x2="1437.4" y2="487.9" stroke="#918e8a" stroke-width="0.4"/>
<line x1="1440.0" y1="478.2" x2="1440.0" y2="488.7" stroke="#918e8a" stroke-width="0.4"/>
<line x1="1442.6" y1="479.1" x2="1442.6" y2="489.6" stroke="#918e8a" stroke-width="0.4"/>
<line x1="1445.2" y1="479.9" x2="1445.2" y2="490.4" stroke="#918e8a" stroke-width="0.4"/>
<line x1="1447.8" y1="480.8" x2="1447.8" y2="491.3" stroke="#918e8a" stroke-width="0.4"/>
<line x1="1450.4" y1="481.6" x2="1450.4" y2="492.1" stroke="#918e8a" stroke-width="0.4"/>
<line x1="1453.0" y1="482.5" x2="1453.0" y2="493.0" stroke="#918e8a" stroke-width="0.4"/>
<line x1="1455.6" y1="483.3" x2="1455.6" y2="493.8" stroke="#918e8a" stroke-width="0.4"/>
<line x1="1458.2" y1="484.2" x2="1458.2" y2="494.7" stroke="#918e8a" stroke-width="0.4"/>
<line x1="1460.8" y1="485.0" x2="1460.8" y2="495.5" stroke="#918e8a" stroke-width="0.4"/>
<line x1="1463.4" y1="485.9" x2="1463.4" y2="496.4" stroke="#918e8a" stroke-width="0.4"/>
<polygon points="1399.0,476.3 1465.0,497.9 1465.0,501.9 1399.0,480.3" fill="#bdbab6" stroke="#66635f" stroke-width="0.6" stroke-linejoin="round" />
<polygon points="1399.0,479.8 1403.0,481.1 1403.0,503.5 1399.0,502.2" fill="#dad6d1" stroke="none" stroke-width="0.8" stroke-linejoin="round" />
<polygon points="1403.0,483.1 1415.0,487.1 1415.0,507.5 1403.0,503.5" fill="#dcd8d3" stroke="none" stroke-width="0.8" stroke-linejoin="round" />
<line x1="1415.0" y1="488.1" x2="1415.0" y2="507.5" stroke="#b5b2ae" stroke-width="0.6"/>
<line x1="1423.0" y1="490.7" x2="1423.0" y2="510.1" stroke="#b5b2ae" stroke-width="0.6"/>
<line x1="1445.0" y1="497.9" x2="1445.0" y2="517.3" stroke="#b5b2ae" stroke-width="0.6"/>
<line x1="1449.0" y1="499.2" x2="1449.0" y2="518.6" stroke="#b5b2ae" stroke-width="0.6"/>
<line x1="1415.0" y1="488.1" x2="1465.0" y2="504.4" stroke="#b5b2ae" stroke-width="0.6"/>
<polygon points="1399.0,502.2 1465.0,523.8 1465.0,536.3 1399.0,514.7" fill="#aba8a4" stroke="#66635f" stroke-width="0.6" stroke-linejoin="round" />
<line x1="1401.0" y1="503.9" x2="1401.0" y2="514.4" stroke="#918e8a" stroke-width="0.4"/>
<line x1="1403.6" y1="504.7" x2="1403.6" y2="515.2" stroke="#918e8a" stroke-width="0.4"/>
<line x1="1406.2" y1="505.6" x2="1406.2" y2="516.1" stroke="#918e8a" stroke-width="0.4"/>
<line x1="1408.8" y1="506.4" x2="1408.8" y2="516.9" stroke="#918e8a" stroke-width="0.4"/>
<line x1="1411.4" y1="507.3" x2="1411.4" y2="517.8" stroke="#918e8a" stroke-width="0.4"/>
<line x1="1414.0" y1="508.1" x2="1414.0" y2="518.6" stroke="#918e8a" stroke-width="0.4"/>
<line x1="1416.6" y1="509.0" x2="1416.6" y2="519.5" stroke="#918e8a" stroke-width="0.4"/>
<line x1="1419.2" y1="509.8" x2="1419.2" y2="520.3" stroke="#918e8a" stroke-width="0.4"/>
<line x1="1421.8" y1="510.7" x2="1421.8" y2="521.2" stroke="#918e8a" stroke-width="0.4"/>
<line x1="1424.4" y1="511.5" x2="1424.4" y2="522.0" stroke="#918e8a" stroke-width="0.4"/>
<line x1="1427.0" y1="512.4" x2="1427.0" y2="522.9" stroke="#918e8a" stroke-width="0.4"/>
<line x1="1429.6" y1="513.2" x2="1429.6" y2="523.7" stroke="#918e8a" stroke-width="0.4"/>
<line x1="1432.2" y1="514.1" x2="1432.2" y2="524.6" stroke="#918e8a" stroke-width="0.4"/>
<line x1="1434.8" y1="514.9" x2="1434.8" y2="525.4" stroke="#918e8a" stroke-width="0.4"/>
<line x1="1437.4" y1="515.8" x2="1437.4" y2="526.3" stroke="#918e8a" stroke-width="0.4"/>
<line x1="1440.0" y1="516.6" x2="1440.0" y2="527.1" stroke="#918e8a" stroke-width="0.4"/>
<line x1="1442.6" y1="517.5" x2="1442.6" y2="528.0" stroke="#918e8a" stroke-width="0.4"/>
<line x1="1445.2" y1="518.3" x2="1445.2" y2="528.8" stroke="#918e8a" stroke-width="0.4"/>
<line x1="1447.8" y1="519.2" x2="1447.8" y2="529.7" stroke="#918e8a" stroke-width="0.4"/>
<line x1="1450.4" y1="520.0" x2="1450.4" y2="530.5" stroke="#918e8a" stroke-width="0.4"/>
<line x1="1453.0" y1="520.9" x2="1453.0" y2="531.4" stroke="#918e8a" stroke-width="0.4"/>
<line x1="1455.6" y1="521.7" x2="1455.6" y2="532.2" stroke="#918e8a" stroke-width="0.4"/>
<line x1="1458.2" y1="522.6" x2="1458.2" y2="533.1" stroke="#918e8a" stroke-width="0.4"/>
<line x1="1460.8" y1="523.4" x2="1460.8" y2="533.9" stroke="#918e8a" stroke-width="0.4"/>
<line x1="1463.4" y1="524.3" x2="1463.4" y2="534.8" stroke="#918e8a" stroke-width="0.4"/>
<polygon points="1399.0,514.7 1465.0,536.3 1465.0,540.3 1399.0,518.7" fill="#bdbab6" stroke="#66635f" stroke-width="0.6" stroke-linejoin="round" />
<polygon points="1399.0,518.2 1403.0,519.5 1403.0,541.9 1399.0,540.6" fill="#dad6d1" stroke="none" stroke-width="0.8" stroke-linejoin="round" />
<polygon points="1403.0,521.5 1415.0,525.5 1415.0,545.9 1403.0,541.9" fill="#dcd8d3" stroke="none" stroke-width="0.8" stroke-linejoin="round" />
<line x1="1415.0" y1="526.5" x2="1415.0" y2="545.9" stroke="#b5b2ae" stroke-width="0.6"/>
<line x1="1423.0" y1="529.1" x2="1423.0" y2="548.5" stroke="#b5b2ae" stroke-width="0.6"/>
<line x1="1445.0" y1="536.3" x2="1445.0" y2="555.7" stroke="#b5b2ae" stroke-width="0.6"/>
<line x1="1449.0" y1="537.6" x2="1449.0" y2="557.0" stroke="#b5b2ae" stroke-width="0.6"/>
<line x1="1415.0" y1="526.5" x2="1465.0" y2="542.8" stroke="#b5b2ae" stroke-width="0.6"/>
<polygon points="1399.0,540.6 1465.0,562.2 1465.0,574.7 1399.0,553.1" fill="#aba8a4" stroke="#66635f" stroke-width="0.6" stroke-linejoin="round" />
<line x1="1401.0" y1="542.3" x2="1401.0" y2="552.8" stroke="#918e8a" stroke-width="0.4"/>
<line x1="1403.6" y1="543.1" x2="1403.6" y2="553.6" stroke="#918e8a" stroke-width="0.4"/>
<line x1="1406.2" y1="544.0" x2="1406.2" y2="554.5" stroke="#918e8a" stroke-width="0.4"/>
<line x1="1408.8" y1="544.8" x2="1408.8" y2="555.3" stroke="#918e8a" stroke-width="0.4"/>
<line x1="1411.4" y1="545.7" x2="1411.4" y2="556.2" stroke="#918e8a" stroke-width="0.4"/>
<line x1="1414.0" y1="546.5" x2="1414.0" y2="557.0" stroke="#918e8a" stroke-width="0.4"/>
<line x1="1416.6" y1="547.4" x2="1416.6" y2="557.9" stroke="#918e8a" stroke-width="0.4"/>
<line x1="1419.2" y1="548.2" x2="1419.2" y2="558.7" stroke="#918e8a" stroke-width="0.4"/>
<line x1="1421.8" y1="549.1" x2="1421.8" y2="559.6" stroke="#918e8a" stroke-width="0.4"/>
<line x1="1424.4" y1="549.9" x2="1424.4" y2="560.4" stroke="#918e8a" stroke-width="0.4"/>
<line x1="1427.0" y1="550.8" x2="1427.0" y2="561.3" stroke="#918e8a" stroke-width="0.4"/>
<line x1="1429.6" y1="551.6" x2="1429.6" y2="562.1" stroke="#918e8a" stroke-width="0.4"/>
<line x1="1432.2" y1="552.5" x2="1432.2" y2="563.0" stroke="#918e8a" stroke-width="0.4"/>
<line x1="1434.8" y1="553.3" x2="1434.8" y2="563.8" stroke="#918e8a" stroke-width="0.4"/>
<line x1="1437.4" y1="554.2" x2="1437.4" y2="564.7" stroke="#918e8a" stroke-width="0.4"/>
<line x1="1440.0" y1="555.0" x2="1440.0" y2="565.5" stroke="#918e8a" stroke-width="0.4"/>
<line x1="1442.6" y1="555.9" x2="1442.6" y2="566.4" stroke="#918e8a" stroke-width="0.4"/>
<line x1="1445.2" y1="556.7" x2="1445.2" y2="567.2" stroke="#918e8a" stroke-width="0.4"/>
<line x1="1447.8" y1="557.6" x2="1447.8" y2="568.1" stroke="#918e8a" stroke-width="0.4"/>
<line x1="1450.4" y1="558.4" x2="1450.4" y2="568.9" stroke="#918e8a" stroke-width="0.4"/>
<line x1="1453.0" y1="559.3" x2="1453.0" y2="569.8" stroke="#918e8a" stroke-width="0.4"/>
<line x1="1455.6" y1="560.1" x2="1455.6" y2="570.6" stroke="#918e8a" stroke-width="0.4"/>
<line x1="1458.2" y1="561.0" x2="1458.2" y2="571.5" stroke="#918e8a" stroke-width="0.4"/>
<line x1="1460.8" y1="561.8" x2="1460.8" y2="572.3" stroke="#918e8a" stroke-width="0.4"/>
<line x1="1463.4" y1="562.7" x2="1463.4" y2="573.2" stroke="#918e8a" stroke-width="0.4"/>
<polygon points="1399.0,553.1 1465.0,574.7 1465.0,578.7 1399.0,557.1" fill="#bdbab6" stroke="#66635f" stroke-width="0.6" stroke-linejoin="round" />
<polygon points="1399.0,556.6 1403.0,557.9 1403.0,580.3 1399.0,579.0" fill="#dad6d1" stroke="none" stroke-width="0.8" stroke-linejoin="round" />
<polygon points="1403.0,559.9 1415.0,563.9 1415.0,584.3 1403.0,580.3" fill="#dcd8d3" stroke="none" stroke-width="0.8" stroke-linejoin="round" />
<line x1="1415.0" y1="564.9" x2="1415.0" y2="584.3" stroke="#b5b2ae" stroke-width="0.6"/>
<line x1="1423.0" y1="567.5" x2="1423.0" y2="586.9" stroke="#b5b2ae" stroke-width="0.6"/>
<line x1="1445.0" y1="574.7" x2="1445.0" y2="594.1" stroke="#b5b2ae" stroke-width="0.6"/>
<line x1="1449.0" y1="576.0" x2="1449.0" y2="595.4" stroke="#b5b2ae" stroke-width="0.6"/>
<line x1="1415.0" y1="564.9" x2="1465.0" y2="581.2" stroke="#b5b2ae" stroke-width="0.6"/>
<polygon points="1399.0,579.0 1465.0,600.6 1465.0,613.1 1399.0,591.5" fill="#aba8a4" stroke="#66635f" stroke-width="0.6" stroke-linejoin="round" />
<line x1="1401.0" y1="580.7" x2="1401.0" y2="591.2" stroke="#918e8a" stroke-width="0.4"/>
<line x1="1403.6" y1="581.5" x2="1403.6" y2="592.0" stroke="#918e8a" stroke-width="0.4"/>
<line x1="1406.2" y1="582.4" x2="1406.2" y2="592.9" stroke="#918e8a" stroke-width="0.4"/>
<line x1="1408.8" y1="583.2" x2="1408.8" y2="593.7" stroke="#918e8a" stroke-width="0.4"/>
<line x1="1411.4" y1="584.1" x2="1411.4" y2="594.6" stroke="#918e8a" stroke-width="0.4"/>
<line x1="1414.0" y1="584.9" x2="1414.0" y2="595.4" stroke="#918e8a" stroke-width="0.4"/>
<line x1="1416.6" y1="585.8" x2="1416.6" y2="596.3" stroke="#918e8a" stroke-width="0.4"/>
<line x1="1419.2" y1="586.6" x2="1419.2" y2="597.1" stroke="#918e8a" stroke-width="0.4"/>
<line x1="1421.8" y1="587.5" x2="1421.8" y2="598.0" stroke="#918e8a" stroke-width="0.4"/>
<line x1="1424.4" y1="588.3" x2="1424.4" y2="598.8" stroke="#918e8a" stroke-width="0.4"/>
<line x1="1427.0" y1="589.2" x2="1427.0" y2="599.7" stroke="#918e8a" stroke-width="0.4"/>
<line x1="1429.6" y1="590.0" x2="1429.6" y2="600.5" stroke="#918e8a" stroke-width="0.4"/>
<line x1="1432.2" y1="590.9" x2="1432.2" y2="601.4" stroke="#918e8a" stroke-width="0.4"/>
<line x1="1434.8" y1="591.7" x2="1434.8" y2="602.2" stroke="#918e8a" stroke-width="0.4"/>
<line x1="1437.4" y1="592.6" x2="1437.4" y2="603.1" stroke="#918e8a" stroke-width="0.4"/>
<line x1="1440.0" y1="593.4" x2="1440.0" y2="603.9" stroke="#918e8a" stroke-width="0.4"/>
<line x1="1442.6" y1="594.3" x2="1442.6" y2="604.8" stroke="#918e8a" stroke-width="0.4"/>
<line x1="1445.2" y1="595.1" x2="1445.2" y2="605.6" stroke="#918e8a" stroke-width="0.4"/>
<line x1="1447.8" y1="596.0" x2="1447.8" y2="606.5" stroke="#918e8a" stroke-width="0.4"/>
<line x1="1450.4" y1="596.8" x2="1450.4" y2="607.3" stroke="#918e8a" stroke-width="0.4"/>
<line x1="1453.0" y1="597.7" x2="1453.0" y2="608.2" stroke="#918e8a" stroke-width="0.4"/>
<line x1="1455.6" y1="598.5" x2="1455.6" y2="609.0" stroke="#918e8a" stroke-width="0.4"/>
<line x1="1458.2" y1="599.4" x2="1458.2" y2="609.9" stroke="#918e8a" stroke-width="0.4"/>
<line x1="1460.8" y1="600.2" x2="1460.8" y2="610.7" stroke="#918e8a" stroke-width="0.4"/>
<line x1="1463.4" y1="601.1" x2="1463.4" y2="611.6" stroke="#918e8a" stroke-width="0.4"/>
<polygon points="1399.0,591.5 1465.0,613.1 1465.0,617.1 1399.0,595.5" fill="#bdbab6" stroke="#66635f" stroke-width="0.6" stroke-linejoin="round" />
<line x1="1343.5" y1="418.7" x2="1343.5" y2="629.7" stroke="#3a3836" stroke-width="1"/>
<polygon points="1357.0,431.1 1377.0,437.6 1377.0,464.6 1357.0,458.1" fill="#f8f5f0" stroke="#7c7976" stroke-width="0.8" stroke-linejoin="round" />
<polygon points="1359.0,433.8 1375.0,439.0 1375.0,462.0 1359.0,456.8" fill="none" stroke="#a7a4a0" stroke-width="0.6" stroke-linejoin="round" />
<polygon points="1357.0,469.5 1377.0,476.0 1377.0,503.0 1357.0,496.5" fill="#f8f5f0" stroke="#7c7976" stroke-width="0.8" stroke-linejoin="round" />
<polygon points="1359.0,472.2 1375.0,477.4 1375.0,500.4 1359.0,495.2" fill="none" stroke="#a7a4a0" stroke-width="0.6" stroke-linejoin="round" />
<polygon points="1357.0,507.9 1377.0,514.4 1377.0,541.4 1357.0,534.9" fill="#f8f5f0" stroke="#7c7976" stroke-width="0.8" stroke-linejoin="round" />
<polygon points="1359.0,510.6 1375.0,515.8 1375.0,538.8 1359.0,533.6" fill="none" stroke="#a7a4a0" stroke-width="0.6" stroke-linejoin="round" />
<polygon points="1357.0,546.3 1377.0,552.8 1377.0,579.8 1357.0,573.3" fill="#f8f5f0" stroke="#7c7976" stroke-width="0.8" stroke-linejoin="round" />
<polygon points="1359.0,549.0 1375.0,554.2 1375.0,577.2 1359.0,572.0" fill="none" stroke="#a7a4a0" stroke-width="0.6" stroke-linejoin="round" />
<polygon points="1344.5,585.0 1381.5,597.1 1381.5,641.1 1344.5,626.0" fill="#e8e4df" stroke="#4a4845" stroke-width="0.7" stroke-linejoin="round" />
<polygon points="1344.5,587.0 1365.5,593.9 1365.5,615.9 1344.5,609.0" fill="#dcd8d3" stroke="#8a8784" stroke-width="0.6" stroke-linejoin="round" />
<polygon points="1368.0,598.7 1380.0,602.6 1380.0,640.6 1368.0,636.7" fill="#f3efea" stroke="#8a8784" stroke-width="0.6" stroke-linejoin="round" />
<polygon points="1423.0,618.7 1451.0,627.8 1451.0,657.8 1423.0,648.7" fill="#f8f5f0" stroke="#7c7976" stroke-width="0.8" stroke-linejoin="round" />
<polygon points="1425.0,621.3 1449.0,629.2 1449.0,655.2 1425.0,647.3" fill="none" stroke="#a7a4a0" stroke-width="0.6" stroke-linejoin="round" />
<polygon points="1465.0,463.4 1482.0,457.8 1482.0,606.3 1465.0,611.9" fill="#c4c0bb" stroke="#55524f" stroke-width="0.6" stroke-linejoin="round" />
<polygon points="1465.0,485.4 1482.0,479.8 1482.0,496.3 1465.0,501.9" fill="#aba8a4" stroke="#66635f" stroke-width="0.6" stroke-linejoin="round" />
<line x1="1467.0" y1="485.7" x2="1467.0" y2="496.7" stroke="#918e8a" stroke-width="0.4"/>
<line x1="1469.6" y1="484.9" x2="1469.6" y2="495.9" stroke="#918e8a" stroke-width="0.4"/>
<line x1="1472.2" y1="484.0" x2="1472.2" y2="495.0" stroke="#918e8a" stroke-width="0.4"/>
<line x1="1474.8" y1="483.2" x2="1474.8" y2="494.2" stroke="#918e8a" stroke-width="0.4"/>
<line x1="1477.4" y1="482.3" x2="1477.4" y2="493.3" stroke="#918e8a" stroke-width="0.4"/>
<line x1="1480.0" y1="481.5" x2="1480.0" y2="492.5" stroke="#918e8a" stroke-width="0.4"/>
<polygon points="1465.0,469.4 1482.0,463.8 1482.0,479.8 1465.0,485.4" fill="#bdb9b4" stroke="none" stroke-width="0.8" stroke-linejoin="round" />
<polygon points="1465.0,523.8 1482.0,518.2 1482.0,534.7 1465.0,540.3" fill="#aba8a4" stroke="#66635f" stroke-width="0.6" stroke-linejoin="round" />
<line x1="1467.0" y1="524.1" x2="1467.0" y2="535.1" stroke="#918e8a" stroke-width="0.4"/>
<line x1="1469.6" y1="523.3" x2="1469.6" y2="534.3" stroke="#918e8a" stroke-width="0.4"/>
<line x1="1472.2" y1="522.4" x2="1472.2" y2="533.4" stroke="#918e8a" stroke-width="0.4"/>
<line x1="1474.8" y1="521.6" x2="1474.8" y2="532.6" stroke="#918e8a" stroke-width="0.4"/>
<line x1="1477.4" y1="520.7" x2="1477.4" y2="531.7" stroke="#918e8a" stroke-width="0.4"/>
<line x1="1480.0" y1="519.9" x2="1480.0" y2="530.9" stroke="#918e8a" stroke-width="0.4"/>
<polygon points="1465.0,507.8 1482.0,502.2 1482.0,518.2 1465.0,523.8" fill="#bdb9b4" stroke="none" stroke-width="0.8" stroke-linejoin="round" />
<polygon points="1465.0,562.2 1482.0,556.6 1482.0,573.1 1465.0,578.7" fill="#aba8a4" stroke="#66635f" stroke-width="0.6" stroke-linejoin="round" />
<line x1="1467.0" y1="562.5" x2="1467.0" y2="573.5" stroke="#918e8a" stroke-width="0.4"/>
<line x1="1469.6" y1="561.7" x2="1469.6" y2="572.7" stroke="#918e8a" stroke-width="0.4"/>
<line x1="1472.2" y1="560.8" x2="1472.2" y2="571.8" stroke="#918e8a" stroke-width="0.4"/>
<line x1="1474.8" y1="560.0" x2="1474.8" y2="571.0" stroke="#918e8a" stroke-width="0.4"/>
<line x1="1477.4" y1="559.1" x2="1477.4" y2="570.1" stroke="#918e8a" stroke-width="0.4"/>
<line x1="1480.0" y1="558.3" x2="1480.0" y2="569.3" stroke="#918e8a" stroke-width="0.4"/>
<polygon points="1465.0,546.2 1482.0,540.6 1482.0,556.6 1465.0,562.2" fill="#bdb9b4" stroke="none" stroke-width="0.8" stroke-linejoin="round" />
<polygon points="1465.0,600.6 1482.0,595.0 1482.0,611.5 1465.0,617.1" fill="#aba8a4" stroke="#66635f" stroke-width="0.6" stroke-linejoin="round" />
<line x1="1467.0" y1="600.9" x2="1467.0" y2="611.9" stroke="#918e8a" stroke-width="0.4"/>
<line x1="1469.6" y1="600.1" x2="1469.6" y2="611.1" stroke="#918e8a" stroke-width="0.4"/>
<line x1="1472.2" y1="599.2" x2="1472.2" y2="610.2" stroke="#918e8a" stroke-width="0.4"/>
<line x1="1474.8" y1="598.4" x2="1474.8" y2="609.4" stroke="#918e8a" stroke-width="0.4"/>
<line x1="1477.4" y1="597.5" x2="1477.4" y2="608.5" stroke="#918e8a" stroke-width="0.4"/>
<line x1="1480.0" y1="596.7" x2="1480.0" y2="607.7" stroke="#918e8a" stroke-width="0.4"/>
<polygon points="1465.0,584.6 1482.0,579.0 1482.0,595.0 1465.0,600.6" fill="#bdb9b4" stroke="none" stroke-width="0.8" stroke-linejoin="round" />
<line x1="1482.0" y1="452.8" x2="1482.0" y2="606.3" stroke="#3a3836" stroke-width="0.9"/>
<line x1="1483.0" y1="490.9" x2="1597.0" y2="453.6" stroke="#55524f" stroke-width="0.8"/>
<line x1="1483.0" y1="529.3" x2="1597.0" y2="492.0" stroke="#55524f" stroke-width="0.8"/>
<line x1="1483.0" y1="567.7" x2="1597.0" y2="530.4" stroke="#55524f" stroke-width="0.8"/>
<line x1="1483.0" y1="606.1" x2="1597.0" y2="568.8" stroke="#55524f" stroke-width="0.8"/>
<polygon points="1501.0,451.6 1510.0,448.7 1510.0,473.7 1501.0,476.6" fill="#e9e4de" stroke="#6f6c69" stroke-width="0.7" stroke-linejoin="round" />
<line x1="1503.0" y1="452.0" x2="1503.0" y2="475.0" stroke="#b1aeaa" stroke-width="0.5"/>
<polygon points="1520.0,445.4 1529.0,442.5 1529.0,467.5 1520.0,470.4" fill="#e9e4de" stroke="#6f6c69" stroke-width="0.7" stroke-linejoin="round" />
<line x1="1522.0" y1="445.8" x2="1522.0" y2="468.8" stroke="#b1aeaa" stroke-width="0.5"/>
<polygon points="1551.0,435.3 1558.0,433.0 1558.0,450.0 1551.0,452.3" fill="#e9e4de" stroke="#6f6c69" stroke-width="0.7" stroke-linejoin="round" />
<line x1="1553.0" y1="435.6" x2="1553.0" y2="450.6" stroke="#b1aeaa" stroke-width="0.5"/>
<polygon points="1583.0,423.8 1592.0,420.9 1592.0,446.4 1583.0,449.3" fill="#e9e4de" stroke="#6f6c69" stroke-width="0.7" stroke-linejoin="round" />
<line x1="1585.0" y1="424.2" x2="1585.0" y2="447.7" stroke="#b1aeaa" stroke-width="0.5"/>
<polygon points="1501.0,490.0 1510.0,487.1 1510.0,512.1 1501.0,515.0" fill="#e9e4de" stroke="#6f6c69" stroke-width="0.7" stroke-linejoin="round" />
<line x1="1503.0" y1="490.4" x2="1503.0" y2="513.4" stroke="#b1aeaa" stroke-width="0.5"/>
<polygon points="1520.0,483.8 1529.0,480.9 1529.0,505.9 1520.0,508.8" fill="#e9e4de" stroke="#6f6c69" stroke-width="0.7" stroke-linejoin="round" />
<line x1="1522.0" y1="484.2" x2="1522.0" y2="507.2" stroke="#b1aeaa" stroke-width="0.5"/>
<polygon points="1551.0,473.7 1558.0,471.4 1558.0,488.4 1551.0,490.7" fill="#e9e4de" stroke="#6f6c69" stroke-width="0.7" stroke-linejoin="round" />
<line x1="1553.0" y1="474.0" x2="1553.0" y2="489.0" stroke="#b1aeaa" stroke-width="0.5"/>
<polygon points="1583.0,462.2 1592.0,459.3 1592.0,484.8 1583.0,487.7" fill="#e9e4de" stroke="#6f6c69" stroke-width="0.7" stroke-linejoin="round" />
<line x1="1585.0" y1="462.6" x2="1585.0" y2="486.1" stroke="#b1aeaa" stroke-width="0.5"/>
<polygon points="1501.0,528.4 1510.0,525.5 1510.0,550.5 1501.0,553.4" fill="#e9e4de" stroke="#6f6c69" stroke-width="0.7" stroke-linejoin="round" />
<line x1="1503.0" y1="528.8" x2="1503.0" y2="551.8" stroke="#b1aeaa" stroke-width="0.5"/>
<polygon points="1520.0,522.2 1529.0,519.3 1529.0,544.3 1520.0,547.2" fill="#e9e4de" stroke="#6f6c69" stroke-width="0.7" stroke-linejoin="round" />
<line x1="1522.0" y1="522.6" x2="1522.0" y2="545.6" stroke="#b1aeaa" stroke-width="0.5"/>
<polygon points="1551.0,512.1 1558.0,509.8 1558.0,526.8 1551.0,529.1" fill="#e9e4de" stroke="#6f6c69" stroke-width="0.7" stroke-linejoin="round" />
<line x1="1553.0" y1="512.4" x2="1553.0" y2="527.4" stroke="#b1aeaa" stroke-width="0.5"/>
<polygon points="1583.0,500.6 1592.0,497.7 1592.0,523.2 1583.0,526.1" fill="#e9e4de" stroke="#6f6c69" stroke-width="0.7" stroke-linejoin="round" />
<line x1="1585.0" y1="501.0" x2="1585.0" y2="524.5" stroke="#b1aeaa" stroke-width="0.5"/>
<polygon points="1501.0,566.8 1510.0,563.9 1510.0,588.9 1501.0,591.8" fill="#e9e4de" stroke="#6f6c69" stroke-width="0.7" stroke-linejoin="round" />
<line x1="1503.0" y1="567.2" x2="1503.0" y2="590.2" stroke="#b1aeaa" stroke-width="0.5"/>
<polygon points="1520.0,560.6 1529.0,557.7 1529.0,582.7 1520.0,585.6" fill="#e9e4de" stroke="#6f6c69" stroke-width="0.7" stroke-linejoin="round" />
<line x1="1522.0" y1="561.0" x2="1522.0" y2="584.0" stroke="#b1aeaa" stroke-width="0.5"/>
<polygon points="1551.0,550.5 1558.0,548.2 1558.0,565.2 1551.0,567.5" fill="#e9e4de" stroke="#6f6c69" stroke-width="0.7" stroke-linejoin="round" />
<line x1="1553.0" y1="550.8" x2="1553.0" y2="565.8" stroke="#b1aeaa" stroke-width="0.5"/>
<polygon points="1583.0,539.0 1592.0,536.1 1592.0,561.6 1583.0,564.5" fill="#e9e4de" stroke="#6f6c69" stroke-width="0.7" stroke-linejoin="round" />
<line x1="1585.0" y1="539.4" x2="1585.0" y2="562.9" stroke="#b1aeaa" stroke-width="0.5"/>
<polygon points="1478.0,628.1 1505.5,619.2 1505.5,647.7 1478.0,656.6" fill="#e6e1db" stroke="#6f6c69" stroke-width="0.8" stroke-linejoin="round" />
<polygon points="1480.0,629.5 1503.5,621.8 1503.5,646.3 1480.0,654.0" fill="none" stroke="#b1aeaa" stroke-width="0.6" stroke-linejoin="round" />
<polygon points="1556.0,601.1 1583.0,592.3 1583.0,621.8 1556.0,630.6" fill="#e6e1db" stroke="#6f6c69" stroke-width="0.8" stroke-linejoin="round" />
<polygon points="1558.0,602.5 1581.0,595.0 1581.0,620.5 1558.0,628.0" fill="none" stroke="#b1aeaa" stroke-width="0.6" stroke-linejoin="round" />
<polygon points="1519.6,606.0 1542.5,599.4 1542.5,655.1 1519.6,662.2" fill="#f8f5f0" stroke="#4a4845" stroke-width="0.8" stroke-linejoin="round" />
<line x1="1521.0" y1="630.1" x2="1541.0" y2="625.5" stroke="#a9a6a2" stroke-width="0.6"/>
<line x1="1521.0" y1="634.1" x2="1541.0" y2="629.5" stroke="#a9a6a2" stroke-width="0.6"/>
<line x1="1521.0" y1="638.1" x2="1541.0" y2="633.5" stroke="#a9a6a2" stroke-width="0.6"/>
<line x1="1521.0" y1="642.1" x2="1541.0" y2="637.5" stroke="#a9a6a2" stroke-width="0.6"/>
<line x1="1521.0" y1="646.1" x2="1541.0" y2="641.5" stroke="#a9a6a2" stroke-width="0.6"/>
<line x1="1521.0" y1="650.1" x2="1541.0" y2="645.5" stroke="#a9a6a2" stroke-width="0.6"/>
<line x1="1521.0" y1="654.1" x2="1541.0" y2="649.5" stroke="#a9a6a2" stroke-width="0.6"/>
<line x1="1521.0" y1="658.1" x2="1541.0" y2="653.5" stroke="#a9a6a2" stroke-width="0.6"/>
<line x1="1465.0" y1="611.9" x2="1465.0" y2="682.4" stroke="#4a4845" stroke-width="1"/>
<line x1="1597.0" y1="415.2" x2="1597.0" y2="568.7" stroke="#4a4845" stroke-width="0.9"/>
<polygon points="1401.0,331.0 1253.0,382.0 1465.0,449.0 1615.0,401.0" fill="#f8f4ee" stroke="#4a4845" stroke-width="0.9" stroke-linejoin="round" />
<polygon points="1253.0,382.0 1465.0,449.0 1465.0,458.0 1256.0,390.0" fill="#f1ede7" stroke="#4a4845" stroke-width="0.8" stroke-linejoin="round" />
<polygon points="1465.0,449.0 1615.0,401.0 1615.0,408.0 1465.0,458.0" fill="#ebe6e0" stroke="#4a4845" stroke-width="0.8" stroke-linejoin="round" />
<line x1="1255.0" y1="386.0" x2="1465.0" y2="453.5" stroke="#9c9994" stroke-width="0.6"/>
<line x1="1465.0" y1="453.5" x2="1615.0" y2="404.5" stroke="#9c9994" stroke-width="0.6"/></g></svg></div>
<div style="position:absolute;left:368px;top:637px;width:122px;height:31px;background:#fff;border:1px solid #e2e8f0;border-radius:6px;box-shadow:0 1px 2px rgba(0,0,0,.05)"></div>
<svg style="position:absolute;left:382px;top:646px;" width="14" height="14" viewBox="0 0 24 24" fill="none" stroke="#0f172a" stroke-width="2" stroke-linecap="round" stroke-linejoin="round"><path d="M21 15v4a2 2 0 0 1-2 2H5a2 2 0 0 1-2-2v-4"/><polyline points="17 8 12 3 7 8"/><line x1="12" x2="12" y1="3" y2="15"/></svg>
<div class="t" style="left:413.5px;top:646.62px;font-size:12.5px;line-height:12.5px;font-weight:400;color:#0f172a;letter-spacing:0.175px;-webkit-text-stroke:0.35px currentColor;">Bild ändern</div>
<div style="position:absolute;left:499px;top:637px;width:41px;height:31px;background:#fff;border:1px solid #e2e8f0;border-radius:6px;box-shadow:0 1px 2px rgba(0,0,0,.05)"></div>
<svg style="position:absolute;left:512px;top:645px;" width="15" height="15" viewBox="0 0 24 24" fill="none" stroke="#0f172a" stroke-width="2" stroke-linecap="round" stroke-linejoin="round"><path d="M3 6h18"/><path d="M19 6v14c0 1-1 2-2 2H7c-1 0-2-1-2-2V6"/><path d="M8 6V4c0-1 1-2 2-2h4c1 0 2 1 2 2v2"/><line x1="10" x2="10" y1="11" y2="17"/><line x1="14" x2="14" y1="11" y2="17"/></svg>
<div class="t" style="left:368px;top:701.65px;font-size:14px;line-height:14px;font-weight:400;color:#0f172a;letter-spacing:0.445px;-webkit-text-stroke:0.35px currentColor;">Gebäude &amp; Wohnungen</div>
<div style="position:absolute;left:766px;top:694px;width:178px;height:31px;background:#fff;border:1px solid #e2e8f0;border-radius:6px;box-shadow:0 1px 2px rgba(0,0,0,.05)"></div>
<svg style="position:absolute;left:779px;top:701px;" width="15" height="15" viewBox="0 0 24 24" fill="none" stroke="#0f172a" stroke-width="2" stroke-linecap="round" stroke-linejoin="round"><rect width="16" height="20" x="4" y="2" rx="2" ry="2"/><path d="M9 22v-4h6v4"/><path d="M8 6h.01"/><path d="M16 6h.01"/><path d="M12 6h.01"/><path d="M12 10h.01"/><path d="M12 14h.01"/><path d="M16 10h.01"/><path d="M16 14h.01"/><path d="M8 10h.01"/><path d="M8 14h.01"/></svg>
<div class="t" style="left:811px;top:703.22px;font-size:12.5px;line-height:12.5px;font-weight:400;color:#0f172a;letter-spacing:0.231px;-webkit-text-stroke:0.35px currentColor;">Gebäude hinzufügen</div>
<div style="position:absolute;left:368px;top:741px;width:577px;height:270px;background:#f8fafc;border:1px solid #e2e8f0;border-radius:8px"></div>
<svg style="position:absolute;left:385px;top:766px;" width="15" height="15" viewBox="0 0 24 24" fill="none" stroke="#0f172a" stroke-width="2" stroke-linecap="round" stroke-linejoin="round"><rect width="16" height="20" x="4" y="2" rx="2" ry="2"/><path d="M9 22v-4h6v4"/><path d="M8 6h.01"/><path d="M16 6h.01"/><path d="M12 6h.01"/><path d="M12 10h.01"/><path d="M12 14h.01"/><path d="M16 10h.01"/><path d="M16 14h.01"/><path d="M8 10h.01"/><path d="M8 14h.01"/></svg>
<div class="t" style="left:409px;top:765.61px;font-size:17px;line-height:17px;font-weight:400;color:#0f172a;letter-spacing:0.098px;-webkit-text-stroke:0.35px currentColor;">Urban Heights Main Building</div>
<div style="position:absolute;left:886px;top:759px;width:42px;height:31px;background:#fff;border:1px solid #e2e8f0;border-radius:6px;box-shadow:0 1px 2px rgba(0,0,0,.05)"></div>
<svg style="position:absolute;left:899px;top:767px;" width="15" height="15" viewBox="0 0 24 24" fill="none" stroke="#0f172a" stroke-width="2" stroke-linecap="round" stroke-linejoin="round"><path d="M3 6h18"/><path d="M19 6v14c0 1-1 2-2 2H7c-1 0-2-1-2-2V6"/><path d="M8 6V4c0-1 1-2 2-2h4c1 0 2 1 2 2v2"/><line x1="10" x2="10" y1="11" y2="17"/><line x1="14" x2="14" y1="11" y2="17"/></svg>
<div class="t" style="left:385px;top:812.15px;font-size:14px;line-height:14px;font-weight:400;color:#0f172a;letter-spacing:0.436px;-webkit-text-stroke:0.35px currentColor;">Gebäudename</div>
<div style="position:absolute;left:385px;top:830px;width:543px;height:40px;background:#fff;border:1px solid #e2e8f0;border-radius:6px;box-shadow:0 1px 2px rgba(0,0,0,.04)"></div>
<div class="t" style="left:398.5px;top:844.15px;font-size:14px;line-height:14px;font-weight:400;color:#0f172a;letter-spacing:0.406px;">Urban Heights Main Building</div>
<div class="t" style="left:385px;top:895.15px;font-size:14px;line-height:14px;font-weight:400;color:#0f172a;letter-spacing:0.594px;-webkit-text-stroke:0.35px currentColor;">Wohnungen</div>
<div style="position:absolute;left:747px;top:886px;width:181px;height:31px;background:#fff;border:1px solid #e2e8f0;border-radius:6px;box-shadow:0 1px 2px rgba(0,0,0,.05)"></div>
<svg style="position:absolute;left:760px;top:894px;" width="15" height="15" viewBox="0 0 24 24" fill="none" stroke="#0f172a" stroke-width="2" stroke-linecap="round" stroke-linejoin="round"><path d="M5 12h14"/><path d="M12 5v14"/></svg>
<div class="t" style="left:791px;top:896.02px;font-size:12.5px;line-height:12.5px;font-weight:400;color:#0f172a;letter-spacing:0.299px;-webkit-text-stroke:0.35px currentColor;">Wohnung hinzufügen</div>
<div style="position:absolute;left:385px;top:934px;width:543px;height:50px;background:#f8fafc;border:1px solid #e2e8f0;border-radius:8px"></div>
<svg style="position:absolute;left:402px;top:951px;" width="15" height="15" viewBox="0 0 24 24" fill="none" stroke="#94a3b8" stroke-width="2" stroke-linecap="round" stroke-linejoin="round"><circle cx="9" cy="12" r="1"/><circle cx="9" cy="5" r="1"/><circle cx="9" cy="19" r="1"/><circle cx="15" cy="12" r="1"/><circle cx="15" cy="5" r="1"/><circle cx="15" cy="19" r="1"/></svg>
<div class="t" style="left:426px;top:953.00px;font-size:13px;line-height:13px;font-weight:400;color:#0f172a;letter-spacing:-0.6px;-webkit-text-stroke:0.35px currentColor;">101</div>
<div class="t" style="left:453px;top:952.15px;font-size:14px;line-height:14px;font-weight:400;color:#6b7280;letter-spacing:0.722px;">4 rooms • 50m² • CHF 750000</div>
<svg style="position:absolute;left:867px;top:951px;" width="15" height="15" viewBox="0 0 24 24" fill="none" stroke="#0f172a" stroke-width="2" stroke-linecap="round" stroke-linejoin="round"><path d="M3 6h18"/><path d="M19 6v14c0 1-1 2-2 2H7c-1 0-2-1-2-2V6"/><path d="M8 6V4c0-1 1-2 2-2h4c1 0 2 1 2 2v2"/><line x1="10" x2="10" y1="11" y2="17"/><line x1="14" x2="14" y1="11" y2="17"/></svg>
<svg style="position:absolute;left:895px;top:951px;" width="15" height="15" viewBox="0 0 24 24" fill="none" stroke="#0f172a" stroke-width="2" stroke-linecap="round" stroke-linejoin="round"><path d="m6 9 6 6 6-6"/></svg>
<div style="position:absolute;left:385px;top:992px;width:543px;height:20px;background:#f8fafc;border:1px solid #e2e8f0;border-radius:8px"></div>
<div style="position:absolute;left:985px;top:59px;width:942px;height:942px;background:#ffffff"></div>
<div style="position:absolute;left:978px;top:522px;width:12px;height:16px;background:#e2e8f0;border-radius:4px"></div>
<svg style="position:absolute;left:981px;top:525px" width="8" height="10"><g fill="#1e293b"><rect x="1" y="1" width="1.8" height="1.8"/><rect x="3.2" y="1" width="1.8" height="1.8"/><rect x="1" y="4" width="1.8" height="1.8"/><rect x="3.2" y="4" width="1.8" height="1.8"/><rect x="1" y="7" width="1.8" height="1.8"/><rect x="3.2" y="7" width="1.8" height="1.8"/></g></svg>
<div class="t" style="left:1281.5px;top:127.92px;font-size:49px;line-height:49px;font-weight:400;color:#000000;letter-spacing:3.148px;-webkit-text-stroke:0.6px #000;">Urban Heights</div>
<div class="t" style="left:1263px;top:192.51px;font-size:32px;line-height:32px;font-weight:400;color:#000000;letter-spacing:2.541px;-webkit-text-stroke:0.4px #000;">Choose your Apartment</div>
<svg style="position:absolute;left:0;top:0" width="1927" height="1001" viewBox="0 0 1927 1001"><polygon points="1129.0,621.0 1509.0,746.0 1771.0,659.0 1615.0,607.0 1401.0,537.0 1267.0,558.0 1129.0,603.0" fill="#b0aca1" stroke="#4a4845" stroke-width="1" stroke-linejoin="round" />
<polygon points="1129.0,603.0 1267.0,558.0 1465.0,620.0 1464.0,669.0 1394.0,692.0" fill="#aeaa9f" stroke="none" stroke-width="0.8" stroke-linejoin="round" />
<line x1="1129.0" y1="603.0" x2="1267.0" y2="558.0" stroke="#4a4845" stroke-width="1"/>
<polygon points="1129.0,603.0 1394.0,692.0 1394.0,706.0 1129.0,621.0" fill="#a9a59a" stroke="#4a4845" stroke-width="0.8" stroke-linejoin="round" />
<polygon points="1394.0,692.0 1464.0,669.0 1464.0,683.0 1394.0,706.0" fill="#a29e93" stroke="#4a4845" stroke-width="0.6" stroke-linejoin="round" />
<line x1="1615.0" y1="607.0" x2="1677.0" y2="627.5" stroke="#4a4845" stroke-width="1"/>
<line x1="1677.0" y1="627.5" x2="1771.0" y2="659.0" stroke="#4a4845" stroke-width="1"/>
<polygon points="1417.0,714.0 1677.0,627.0 1679.0,630.0 1420.0,717.0" fill="#8f8b81" stroke="none" stroke-width="0.8" stroke-linejoin="round" />
<line x1="1414.0" y1="711.0" x2="1674.0" y2="625.0" stroke="#c4c0b6" stroke-width="1"/>
<polygon points="1268.0,394.0 1465.0,458.4 1465.0,669.4 1268.0,603.0" fill="#f8f5f0" stroke="#4a4845" stroke-width="0.9" stroke-linejoin="round" />
<polygon points="1465.0,458.4 1597.0,415.2 1597.0,568.7 1465.0,611.9" fill="#e6e1db" stroke="#4a4845" stroke-width="0.9" stroke-linejoin="round" />
<polygon points="1465.0,611.9 1597.0,568.7 1597.0,600.0 1615.0,606.0 1615.0,632.3 1465.0,682.4" fill="#e3ded8" stroke="#4a4845" stroke-width="0.9" stroke-linejoin="round" />
<polygon points="1598.0,600.0 1615.0,606.0 1615.0,624.0 1598.0,618.0" fill="#b8b5b1" stroke="#4a4845" stroke-width="0.6" stroke-linejoin="round" />
<line x1="1599.5" y1="601.0" x2="1599.5" y2="618.0" stroke="#85827e" stroke-width="0.5"/>
<line x1="1601.9" y1="601.9" x2="1601.9" y2="618.9" stroke="#85827e" stroke-width="0.5"/>
<line x1="1604.3" y1="602.7" x2="1604.3" y2="619.7" stroke="#85827e" stroke-width="0.5"/>
<line x1="1606.7" y1="603.5" x2="1606.7" y2="620.5" stroke="#85827e" stroke-width="0.5"/>
<line x1="1609.1" y1="604.4" x2="1609.1" y2="621.4" stroke="#85827e" stroke-width="0.5"/>
<line x1="1611.5" y1="605.2" x2="1611.5" y2="622.2" stroke="#85827e" stroke-width="0.5"/>
<line x1="1613.9" y1="606.1" x2="1613.9" y2="623.1" stroke="#85827e" stroke-width="0.5"/>
<line x1="1268.0" y1="432.4" x2="1276.0" y2="435.0" stroke="#9a9794" stroke-width="0.7"/>
<line x1="1336.5" y1="454.8" x2="1399.0" y2="475.2" stroke="#6f6c69" stroke-width="0.7"/>
<line x1="1268.0" y1="470.8" x2="1276.0" y2="473.4" stroke="#9a9794" stroke-width="0.7"/>
<line x1="1336.5" y1="493.2" x2="1399.0" y2="513.6" stroke="#6f6c69" stroke-width="0.7"/>
<line x1="1268.0" y1="509.2" x2="1276.0" y2="511.8" stroke="#9a9794" stroke-width="0.7"/>
<line x1="1336.5" y1="531.6" x2="1399.0" y2="552.0" stroke="#6f6c69" stroke-width="0.7"/>
<line x1="1268.0" y1="547.6" x2="1276.0" y2="550.2" stroke="#9a9794" stroke-width="0.7"/>
<line x1="1336.5" y1="570.0" x2="1399.0" y2="590.4" stroke="#6f6c69" stroke-width="0.7"/>
<line x1="1268.0" y1="394.0" x2="1268.0" y2="603.0" stroke="#4a4845" stroke-width="1"/>
<line x1="1343.5" y1="572.2" x2="1465.0" y2="611.9" stroke="#6f6c69" stroke-width="0.8"/>
<polygon points="1276.0,403.6 1336.5,423.4 1336.5,612.4 1276.0,592.6" fill="#f3efea" stroke="#4a4845" stroke-width="0.7" stroke-linejoin="round" />
<polygon points="1276.0,403.6 1280.0,404.9 1280.0,422.9 1276.0,421.6" fill="#dad6d1" stroke="none" stroke-width="0.8" stroke-linejoin="round" />
<polygon points="1280.0,406.9 1292.0,410.8 1292.0,426.8 1280.0,422.9" fill="#dcd8d3" stroke="none" stroke-width="0.8" stroke-linejoin="round" />
<line x1="1292.0" y1="411.8" x2="1292.0" y2="426.8" stroke="#b5b2ae" stroke-width="0.6"/>
<line x1="1300.0" y1="414.5" x2="1300.0" y2="429.5" stroke="#b5b2ae" stroke-width="0.6"/>
<line x1="1322.0" y1="421.7" x2="1322.0" y2="436.7" stroke="#b5b2ae" stroke-width="0.6"/>
<line x1="1320.5" y1="421.2" x2="1320.5" y2="436.2" stroke="#b5b2ae" stroke-width="0.6"/>
<line x1="1292.0" y1="411.8" x2="1336.5" y2="426.4" stroke="#b5b2ae" stroke-width="0.6"/>
<polygon points="1276.0,421.6 1336.5,441.4 1336.5,453.9 1276.0,434.1" fill="#aba8a4" stroke="#66635f" stroke-width="0.6" stroke-linejoin="round" />
<line x1="1278.0" y1="423.3" x2="1278.0" y2="433.8" stroke="#918e8a" stroke-width="0.4"/>
<line x1="1280.6" y1="424.1" x2="1280.6" y2="434.6" stroke="#918e8a" stroke-width="0.4"/>
<line x1="1283.2" y1="425.0" x2="1283.2" y2="435.5" stroke="#918e8a" stroke-width="0.4"/>
<line x1="1285.8" y1="425.8" x2="1285.8" y2="436.3" stroke="#918e8a" stroke-width="0.4"/>
<line x1="1288.4" y1="426.7" x2="1288.4" y2="437.2" stroke="#918e8a" stroke-width="0.4"/>
<line x1="1291.0" y1="427.5" x2="1291.0" y2="438.0" stroke="#918e8a" stroke-width="0.4"/>
<line x1="1293.6" y1="428.4" x2="1293.6" y2="438.9" stroke="#918e8a" stroke-width="0.4"/>
<line x1="1296.2" y1="429.2" x2="1296.2" y2="439.7" stroke="#918e8a" stroke-width="0.4"/>
<line x1="1298.8" y1="430.1" x2="1298.8" y2="440.6" stroke="#918e8a" stroke-width="0.4"/>
<line x1="1301.4" y1="430.9" x2="1301.4" y2="441.4" stroke="#918e8a" stroke-width="0.4"/>
<line x1="1304.0" y1="431.8" x2="1304.0" y2="442.3" stroke="#918e8a" stroke-width="0.4"/>
<line x1="1306.6" y1="432.6" x2="1306.6" y2="443.1" stroke="#918e8a" stroke-width="0.4"/>
<line x1="1309.2" y1="433.5" x2="1309.2" y2="444.0" stroke="#918e8a" stroke-width="0.4"/>
<line x1="1311.8" y1="434.3" x2="1311.8" y2="444.8" stroke="#918e8a" stroke-width="0.4"/>
<line x1="1314.4" y1="435.2" x2="1314.4" y2="445.7" stroke="#918e8a" stroke-width="0.4"/>
<line x1="1317.0" y1="436.0" x2="1317.0" y2="446.5" stroke="#918e8a" stroke-width="0.4"/>
<line x1="1319.6" y1="436.9" x2="1319.6" y2="447.4" stroke="#918e8a" stroke-width="0.4"/>
<line x1="1322.2" y1="437.7" x2="1322.2" y2="448.2" stroke="#918e8a" stroke-width="0.4"/>
<line x1="1324.8" y1="438.6" x2="1324.8" y2="449.1" stroke="#918e8a" stroke-width="0.4"/>
<line x1="1327.4" y1="439.4" x2="1327.4" y2="449.9" stroke="#918e8a" stroke-width="0.4"/>
<line x1="1330.0" y1="440.3" x2="1330.0" y2="450.8" stroke="#918e8a" stroke-width="0.4"/>
<line x1="1332.6" y1="441.1" x2="1332.6" y2="451.6" stroke="#918e8a" stroke-width="0.4"/>
<line x1="1335.2" y1="442.0" x2="1335.2" y2="452.5" stroke="#918e8a" stroke-width="0.4"/>
<polygon points="1276.0,434.1 1336.5,453.9 1336.5,457.9 1276.0,438.1" fill="#bdbab6" stroke="#66635f" stroke-width="0.6" stroke-linejoin="round" />
<polygon points="1276.0,437.6 1280.0,438.9 1280.0,461.3 1276.0,460.0" fill="#dad6d1" stroke="none" stroke-width="0.8" stroke-linejoin="round" />
<polygon points="1280.0,440.9 1292.0,444.8 1292.0,465.2 1280.0,461.3" fill="#dcd8d3" stroke="none" stroke-width="0.8" stroke-linejoin="round" />
<line x1="1292.0" y1="445.8" x2="1292.0" y2="465.2" stroke="#b5b2ae" stroke-width="0.6"/>
<line x1="1300.0" y1="448.5" x2="1300.0" y2="467.9" stroke="#b5b2ae" stroke-width="0.6"/>
<line x1="1322.0" y1="455.7" x2="1322.0" y2="475.1" stroke="#b5b2ae" stroke-width="0.6"/>
<line x1="1320.5" y1="455.2" x2="1320.5" y2="474.6" stroke="#b5b2ae" stroke-width="0.6"/>
<line x1="1292.0" y1="445.8" x2="1336.5" y2="460.4" stroke="#b5b2ae" stroke-width="0.6"/>
<polygon points="1276.0,460.0 1336.5,479.8 1336.5,492.3 1276.0,472.5" fill="#aba8a4" stroke="#66635f" stroke-width="0.6" stroke-linejoin="round" />
<line x1="1278.0" y1="461.7" x2="1278.0" y2="472.2" stroke="#918e8a" stroke-width="0.4"/>
<line x1="1280.6" y1="462.5" x2="1280.6" y2="473.0" stroke="#918e8a" stroke-width="0.4"/>
<line x1="1283.2" y1="463.4" x2="1283.2" y2="473.9" stroke="#918e8a" stroke-width="0.4"/>
<line x1="1285.8" y1="464.2" x2="1285.8" y2="474.7" stroke="#918e8a" stroke-width="0.4"/>
<line x1="1288.4" y1="465.1" x2="1288.4" y2="475.6" stroke="#918e8a" stroke-width="0.4"/>
<line x1="1291.0" y1="465.9" x2="1291.0" y2="476.4" stroke="#918e8a" stroke-width="0.4"/>
<line x1="1293.6" y1="466.8" x2="1293.6" y2="477.3" stroke="#918e8a" stroke-width="0.4"/>
<line x1="1296.2" y1="467.6" x2="1296.2" y2="478.1" stroke="#918e8a" stroke-width="0.4"/>
<line x1="1298.8" y1="468.5" x2="1298.8" y2="479.0" stroke="#918e8a" stroke-width="0.4"/>
<line x1="1301.4" y1="469.3" x2="1301.4" y2="479.8" stroke="#918e8a" stroke-width="0.4"/>
<line x1="1304.0" y1="470.2" x2="1304.0" y2="480.7" stroke="#918e8a" stroke-width="0.4"/>
<line x1="1306.6" y1="471.0" x2="1306.6" y2="481.5" stroke="#918e8a" stroke-width="0.4"/>
<line x1="1309.2" y1="471.9" x2="1309.2" y2="482.4" stroke="#918e8a" stroke-width="0.4"/>
<line x1="1311.8" y1="472.7" x2="1311.8" y2="483.2" stroke="#918e8a" stroke-width="0.4"/>
<line x1="1314.4" y1="473.6" x2="1314.4" y2="484.1" stroke="#918e8a" stroke-width="0.4"/>
<line x1="1317.0" y1="474.4" x2="1317.0" y2="484.9" stroke="#918e8a" stroke-width="0.4"/>
<line x1="1319.6" y1="475.3" x2="1319.6" y2="485.8" stroke="#918e8a" stroke-width="0.4"/>
<line x1="1322.2" y1="476.1" x2="1322.2" y2="486.6" stroke="#918e8a" stroke-width="0.4"/>
<line x1="1324.8" y1="477.0" x2="1324.8" y2="487.5" stroke="#918e8a" stroke-width="0.4"/>
<line x1="1327.4" y1="477.8" x2="1327.4" y2="488.3" stroke="#918e8a" stroke-width="0.4"/>
<line x1="1330.0" y1="478.7" x2="1330.0" y2="489.2" stroke="#918e8a" stroke-width="0.4"/>
<line x1="1332.6" y1="479.5" x2="1332.6" y2="490.0" stroke="#918e8a" stroke-width="0.4"/>
<line x1="1335.2" y1="480.4" x2="1335.2" y2="490.9" stroke="#918e8a" stroke-width="0.4"/>
<polygon points="1276.0,472.5 1336.5,492.3 1336.5,496.3 1276.0,476.5" fill="#bdbab6" stroke="#66635f" stroke-width="0.6" stroke-linejoin="round" />
<polygon points="1276.0,476.0 1280.0,477.3 1280.0,499.7 1276.0,498.4" fill="#dad6d1" stroke="none" stroke-width="0.8" stroke-linejoin="round" />
<polygon points="1280.0,479.3 1292.0,483.2 1292.0,503.6 1280.0,499.7" fill="#dcd8d3" stroke="none" stroke-width="0.8" stroke-linejoin="round" />
<line x1="1292.0" y1="484.2" x2="1292.0" y2="503.6" stroke="#b5b2ae" stroke-width="0.6"/>
<line x1="1300.0" y1="486.9" x2="1300.0" y2="506.3" stroke="#b5b2ae" stroke-width="0.6"/>
<line x1="1322.0" y1="494.1" x2="1322.0" y2="513.5" stroke="#b5b2ae" stroke-width="0.6"/>
<line x1="1320.5" y1="493.6" x2="1320.5" y2="513.0" stroke="#b5b2ae" stroke-width="0.6"/>
<line x1="1292.0" y1="484.2" x2="1336.5" y2="498.8" stroke="#b5b2ae" stroke-width="0.6"/>
<polygon points="1276.0,498.4 1336.5,518.2 1336.5,530.7 1276.0,510.9" fill="#aba8a4" stroke="#66635f" stroke-width="0.6" stroke-linejoin="round" />
<line x1="1278.0" y1="500.1" x2="1278.0" y2="510.6" stroke="#918e8a" stroke-width="0.4"/>
<line x1="1280.6" y1="500.9" x2="1280.6" y2="511.4" stroke="#918e8a" stroke-width="0.4"/>
<line x1="1283.2" y1="501.8" x2="1283.2" y2="512.3" stroke="#918e8a" stroke-width="0.4"/>
<line x1="1285.8" y1="502.6" x2="1285.8" y2="513.1" stroke="#918e8a" stroke-width="0.4"/>
<line x1="1288.4" y1="503.5" x2="1288.4" y2="514.0" stroke="#918e8a" stroke-width="0.4"/>
<line x1="1291.0" y1="504.3" x2="1291.0" y2="514.8" stroke="#918e8a" stroke-width="0.4"/>
<line x1="1293.6" y1="505.2" x2="1293.6" y2="515.7" stroke="#918e8a" stroke-width="0.4"/>
<line x1="1296.2" y1="506.0" x2="1296.2" y2="516.5" stroke="#918e8a" stroke-width="0.4"/>
<line x1="1298.8" y1="506.9" x2="1298.8" y2="517.4" stroke="#918e8a" stroke-width="0.4"/>
<line x1="1301.4" y1="507.7" x2="1301.4" y2="518.2" stroke="#918e8a" stroke-width="0.4"/>
<line x1="1304.0" y1="508.6" x2="1304.0" y2="519.1" stroke="#918e8a" stroke-width="0.4"/>
<line x1="1306.6" y1="509.4" x2="1306.6" y2="519.9" stroke="#918e8a" stroke-width="0.4"/>
<line x1="1309.2" y1="510.3" x2="1309.2" y2="520.8" stroke="#918e8a" stroke-width="0.4"/>
<line x1="1311.8" y1="511.1" x2="1311.8" y2="521.6" stroke="#918e8a" stroke-width="0.4"/>
<line x1="1314.4" y1="512.0" x2="1314.4" y2="522.5" stroke="#918e8a" stroke-width="0.4"/>
<line x1="1317.0" y1="512.8" x2="1317.0" y2="523.3" stroke="#918e8a" stroke-width="0.4"/>
<line x1="1319.6" y1="513.7" x2="1319.6" y2="524.2" stroke="#918e8a" stroke-width="0.4"/>
<line x1="1322.2" y1="514.5" x2="1322.2" y2="525.0" stroke="#918e8a" stroke-width="0.4"/>
<line x1="1324.8" y1="515.4" x2="1324.8" y2="525.9" stroke="#918e8a" stroke-width="0.4"/>
<line x1="1327.4" y1="516.2" x2="1327.4" y2="526.7" stroke="#918e8a" stroke-width="0.4"/>
<line x1="1330.0" y1="517.1" x2="1330.0" y2="527.6" stroke="#918e8a" stroke-width="0.4"/>
<line x1="1332.6" y1="517.9" x2="1332.6" y2="528.4" stroke="#918e8a" stroke-width="0.4"/>
<line x1="1335.2" y1="518.8" x2="1335.2" y2="529.3" stroke="#918e8a" stroke-width="0.4"/>
<polygon points="1276.0,510.9 1336.5,530.7 1336.5,534.7 1276.0,514.9" fill="#bdbab6" stroke="#66635f" stroke-width="0.6" stroke-linejoin="round" />
<polygon points="1276.0,514.4 1280.0,515.7 1280.0,538.1 1276.0,536.8" fill="#dad6d1" stroke="none" stroke-width="0.8" stroke-linejoin="round" />
<polygon points="1280.0,517.7 1292.0,521.6 1292.0,542.0 1280.0,538.1" fill="#dcd8d3" stroke="none" stroke-width="0.8" stroke-linejoin="round" />
<line x1="1292.0" y1="522.6" x2="1292.0" y2="542.0" stroke="#b5b2ae" stroke-width="0.6"/>
<line x1="1300.0" y1="525.3" x2="1300.0" y2="544.7" stroke="#b5b2ae" stroke-width="0.6"/>
<line x1="1322.0" y1="532.5" x2="1322.0" y2="551.9" stroke="#b5b2ae" stroke-width="0.6"/>
<line x1="1320.5" y1="532.0" x2="1320.5" y2="551.4" stroke="#b5b2ae" stroke-width="0.6"/>
<line x1="1292.0" y1="522.6" x2="1336.5" y2="537.2" stroke="#b5b2ae" stroke-width="0.6"/>
<polygon points="1276.0,536.8 1336.5,556.6 1336.5,569.1 1276.0,549.3" fill="#aba8a4" stroke="#66635f" stroke-width="0.6" stroke-linejoin="round" />
<line x1="1278.0" y1="538.5" x2="1278.0" y2="549.0" stroke="#918e8a" stroke-width="0.4"/>
<line x1="1280.6" y1="539.3" x2="1280.6" y2="549.8" stroke="#918e8a" stroke-width="0.4"/>
<line x1="1283.2" y1="540.2" x2="1283.2" y2="550.7" stroke="#918e8a" stroke-width="0.4"/>
<line x1="1285.8" y1="541.0" x2="1285.8" y2="551.5" stroke="#918e8a" stroke-width="0.4"/>
<line x1="1288.4" y1="541.9" x2="1288.4" y2="552.4" stroke="#918e8a" stroke-width="0.4"/>
<line x1="1291.0" y1="542.7" x2="1291.0" y2="553.2" stroke="#918e8a" stroke-width="0.4"/>
<line x1="1293.6" y1="543.6" x2="1293.6" y2="554.1" stroke="#918e8a" stroke-width="0.4"/>
<line x1="1296.2" y1="544.4" x2="1296.2" y2="554.9" stroke="#918e8a" stroke-width="0.4"/>
<line x1="1298.8" y1="545.3" x2="1298.8" y2="555.8" stroke="#918e8a" stroke-width="0.4"/>
<line x1="1301.4" y1="546.1" x2="1301.4" y2="556.6" stroke="#918e8a" stroke-width="0.4"/>
<line x1="1304.0" y1="547.0" x2="1304.0" y2="557.5" stroke="#918e8a" stroke-width="0.4"/>
<line x1="1306.6" y1="547.8" x2="1306.6" y2="558.3" stroke="#918e8a" stroke-width="0.4"/>
<line x1="1309.2" y1="548.7" x2="1309.2" y2="559.2" stroke="#918e8a" stroke-width="0.4"/>
<line x1="1311.8" y1="549.5" x2="1311.8" y2="560.0" stroke="#918e8a" stroke-width="0.4"/>
<line x1="1314.4" y1="550.4" x2="1314.4" y2="560.9" stroke="#918e8a" stroke-width="0.4"/>
<line x1="1317.0" y1="551.2" x2="1317.0" y2="561.7" stroke="#918e8a" stroke-width="0.4"/>
<line x1="1319.6" y1="552.1" x2="1319.6" y2="562.6" stroke="#918e8a" stroke-width="0.4"/>
<line x1="1322.2" y1="552.9" x2="1322.2" y2="563.4" stroke="#918e8a" stroke-width="0.4"/>
<line x1="1324.8" y1="553.8" x2="1324.8" y2="564.3" stroke="#918e8a" stroke-width="0.4"/>
<line x1="1327.4" y1="554.6" x2="1327.4" y2="565.1" stroke="#918e8a" stroke-width="0.4"/>
<line x1="1330.0" y1="555.5" x2="1330.0" y2="566.0" stroke="#918e8a" stroke-width="0.4"/>
<line x1="1332.6" y1="556.3" x2="1332.6" y2="566.8" stroke="#918e8a" stroke-width="0.4"/>
<line x1="1335.2" y1="557.2" x2="1335.2" y2="567.7" stroke="#918e8a" stroke-width="0.4"/>
<polygon points="1276.0,549.3 1336.5,569.1 1336.5,573.1 1276.0,553.3" fill="#bdbab6" stroke="#66635f" stroke-width="0.6" stroke-linejoin="round" />
<polygon points="1276.0,552.8 1280.0,554.1 1280.0,576.5 1276.0,575.2" fill="#dad6d1" stroke="none" stroke-width="0.8" stroke-linejoin="round" />
<polygon points="1280.0,556.1 1292.0,560.0 1292.0,580.4 1280.0,576.5" fill="#dcd8d3" stroke="none" stroke-width="0.8" stroke-linejoin="round" />
<line x1="1292.0" y1="561.0" x2="1292.0" y2="580.4" stroke="#b5b2ae" stroke-width="0.6"/>
<line x1="1300.0" y1="563.7" x2="1300.0" y2="583.1" stroke="#b5b2ae" stroke-width="0.6"/>
<line x1="1322.0" y1="570.9" x2="1322.0" y2="590.3" stroke="#b5b2ae" stroke-width="0.6"/>
<line x1="1320.5" y1="570.4" x2="1320.5" y2="589.8" stroke="#b5b2ae" stroke-width="0.6"/>
<line x1="1292.0" y1="561.0" x2="1336.5" y2="575.6" stroke="#b5b2ae" stroke-width="0.6"/>
<polygon points="1276.0,575.2 1336.5,595.0 1336.5,607.5 1276.0,587.7" fill="#aba8a4" stroke="#66635f" stroke-width="0.6" stroke-linejoin="round" />
<line x1="1278.0" y1="576.9" x2="1278.0" y2="587.4" stroke="#918e8a" stroke-width="0.4"/>
<line x1="1280.6" y1="577.7" x2="1280.6" y2="588.2" stroke="#918e8a" stroke-width="0.4"/>
<line x1="1283.2" y1="578.6" x2="1283.2" y2="589.1" stroke="#918e8a" stroke-width="0.4"/>
<line x1="1285.8" y1="579.4" x2="1285.8" y2="589.9" stroke="#918e8a" stroke-width="0.4"/>
<line x1="1288.4" y1="580.3" x2="1288.4" y2="590.8" stroke="#918e8a" stroke-width="0.4"/>
<line x1="1291.0" y1="581.1" x2="1291.0" y2="591.6" stroke="#918e8a" stroke-width="0.4"/>
<line x1="1293.6" y1="582.0" x2="1293.6" y2="592.5" stroke="#918e8a" stroke-width="0.4"/>
<line x1="1296.2" y1="582.8" x2="1296.2" y2="593.3" stroke="#918e8a" stroke-width="0.4"/>
<line x1="1298.8" y1="583.7" x2="1298.8" y2="594.2" stroke="#918e8a" stroke-width="0.4"/>
<line x1="1301.4" y1="584.5" x2="1301.4" y2="595.0" stroke="#918e8a" stroke-width="0.4"/>
<line x1="1304.0" y1="585.4" x2="1304.0" y2="595.9" stroke="#918e8a" stroke-width="0.4"/>
<line x1="1306.6" y1="586.2" x2="1306.6" y2="596.7" stroke="#918e8a" stroke-width="0.4"/>
<line x1="1309.2" y1="587.1" x2="1309.2" y2="597.6" stroke="#918e8a" stroke-width="0.4"/>
<line x1="1311.8" y1="587.9" x2="1311.8" y2="598.4" stroke="#918e8a" stroke-width="0.4"/>
<line x1="1314.4" y1="588.8" x2="1314.4" y2="599.3" stroke="#918e8a" stroke-width="0.4"/>
<line x1="1317.0" y1="589.6" x2="1317.0" y2="600.1" stroke="#918e8a" stroke-width="0.4"/>
<line x1="1319.6" y1="590.5" x2="1319.6" y2="601.0" stroke="#918e8a" stroke-width="0.4"/>
<line x1="1322.2" y1="591.3" x2="1322.2" y2="601.8" stroke="#918e8a" stroke-width="0.4"/>
<line x1="1324.8" y1="592.2" x2="1324.8" y2="602.7" stroke="#918e8a" stroke-width="0.4"/>
<line x1="1327.4" y1="593.0" x2="1327.4" y2="603.5" stroke="#918e8a" stroke-width="0.4"/>
<line x1="1330.0" y1="593.9" x2="1330.0" y2="604.4" stroke="#918e8a" stroke-width="0.4"/>
<line x1="1332.6" y1="594.7" x2="1332.6" y2="605.2" stroke="#918e8a" stroke-width="0.4"/>
<line x1="1335.2" y1="595.6" x2="1335.2" y2="606.1" stroke="#918e8a" stroke-width="0.4"/>
<polygon points="1276.0,587.7 1336.5,607.5 1336.5,611.5 1276.0,591.7" fill="#bdbab6" stroke="#66635f" stroke-width="0.6" stroke-linejoin="round" />
<polygon points="1399.0,445.8 1465.0,467.4 1465.0,611.9 1399.0,590.3" fill="#f3efea" stroke="#4a4845" stroke-width="0.7" stroke-linejoin="round" />
<polygon points="1399.0,445.8 1403.0,447.1 1403.0,465.1 1399.0,463.8" fill="#dad6d1" stroke="none" stroke-width="0.8" stroke-linejoin="round" />
<polygon points="1403.0,449.1 1415.0,453.1 1415.0,469.1 1403.0,465.1" fill="#dcd8d3" stroke="none" stroke-width="0.8" stroke-linejoin="round" />
<line x1="1415.0" y1="454.1" x2="1415.0" y2="469.1" stroke="#b5b2ae" stroke-width="0.6"/>
<line x1="1423.0" y1="456.7" x2="1423.0" y2="471.7" stroke="#b5b2ae" stroke-width="0.6"/>
<line x1="1445.0" y1="463.9" x2="1445.0" y2="478.9" stroke="#b5b2ae" stroke-width="0.6"/>
<line x1="1449.0" y1="465.2" x2="1449.0" y2="480.2" stroke="#b5b2ae" stroke-width="0.6"/>
<line x1="1415.0" y1="454.1" x2="1465.0" y2="470.4" stroke="#b5b2ae" stroke-width="0.6"/>
<polygon points="1399.0,463.8 1465.0,485.4 1465.0,497.9 1399.0,476.3" fill="#aba8a4" stroke="#66635f" stroke-width="0.6" stroke-linejoin="round" />
<line x1="1401.0" y1="465.5" x2="1401.0" y2="476.0" stroke="#918e8a" stroke-width="0.4"/>
<line x1="1403.6" y1="466.3" x2="1403.6" y2="476.8" stroke="#918e8a" stroke-width="0.4"/>
<line x1="1406.2" y1="467.2" x2="1406.2" y2="477.7" stroke="#918e8a" stroke-width="0.4"/>
<line x1="1408.8" y1="468.0" x2="1408.8" y2="478.5" stroke="#918e8a" stroke-width="0.4"/>
<line x1="1411.4" y1="468.9" x2="1411.4" y2="479.4" stroke="#918e8a" stroke-width="0.4"/>
<line x1="1414.0" y1="469.7" x2="1414.0" y2="480.2" stroke="#918e8a" stroke-width="0.4"/>
<line x1="1416.6" y1="470.6" x2="1416.6" y2="481.1" stroke="#918e8a" stroke-width="0.4"/>
<line x1="1419.2" y1="471.4" x2="1419.2" y2="481.9" stroke="#918e8a" stroke-width="0.4"/>
<line x1="1421.8" y1="472.3" x2="1421.8" y2="482.8" stroke="#918e8a" stroke-width="0.4"/>
<line x1="1424.4" y1="473.1" x2="1424.4" y2="483.6" stroke="#918e8a" stroke-width="0.4"/>
<line x1="1427.0" y1="474.0" x2="1427.0" y2="484.5" stroke="#918e8a" stroke-width="0.4"/>
<line x1="1429.6" y1="474.8" x2="1429.6" y2="485.3" stroke="#918e8a" stroke-width="0.4"/>
<line x1="1432.2" y1="475.7" x2="1432.2" y2="486.2" stroke="#918e8a" stroke-width="0.4"/>
<line x1="1434.8" y1="476.5" x2="1434.8" y2="487.0" stroke="#918e8a" stroke-width="0.4"/>
<line x1="1437.4" y1="477.4" x2="1437.4" y2="487.9" stroke="#918e8a" stroke-width="0.4"/>
<line x1="1440.0" y1="478.2" x2="1440.0" y2="488.7" stroke="#918e8a" stroke-width="0.4"/>
<line x1="1442.6" y1="479.1" x2="1442.6" y2="489.6" stroke="#918e8a" stroke-width="0.4"/>
<line x1="1445.2" y1="479.9" x2="1445.2" y2="490.4" stroke="#918e8a" stroke-width="0.4"/>
<line x1="1447.8" y1="480.8" x2="1447.8" y2="491.3" stroke="#918e8a" stroke-width="0.4"/>
<line x1="1450.4" y1="481.6" x2="1450.4" y2="492.1" stroke="#918e8a" stroke-width="0.4"/>
<line x1="1453.0" y1="482.5" x2="1453.0" y2="493.0" stroke="#918e8a" stroke-width="0.4"/>
<line x1="1455.6" y1="483.3" x2="1455.6" y2="493.8" stroke="#918e8a" stroke-width="0.4"/>
<line x1="1458.2" y1="484.2" x2="1458.2" y2="494.7" stroke="#918e8a" stroke-width="0.4"/>
<line x1="1460.8" y1="485.0" x2="1460.8" y2="495.5" stroke="#918e8a" stroke-width="0.4"/>
<line x1="1463.4" y1="485.9" x2="1463.4" y2="496.4" stroke="#918e8a" stroke-width="0.4"/>
<polygon points="1399.0,476.3 1465.0,497.9 1465.0,501.9 1399.0,480.3" fill="#bdbab6" stroke="#66635f" stroke-width="0.6" stroke-linejoin="round" />
<polygon points="1399.0,479.8 1403.0,481.1 1403.0,503.5 1399.0,502.2" fill="#dad6d1" stroke="none" stroke-width="0.8" stroke-linejoin="round" />
<polygon points="1403.0,483.1 1415.0,487.1 1415.0,507.5 1403.0,503.5" fill="#dcd8d3" stroke="none" stroke-width="0.8" stroke-linejoin="round" />
<line x1="1415.0" y1="488.1" x2="1415.0" y2="507.5" stroke="#b5b2ae" stroke-width="0.6"/>
<line x1="1423.0" y1="490.7" x2="1423.0" y2="510.1" stroke="#b5b2ae" stroke-width="0.6"/>
<line x1="1445.0" y1="497.9" x2="1445.0" y2="517.3" stroke="#b5b2ae" stroke-width="0.6"/>
<line x1="1449.0" y1="499.2" x2="1449.0" y2="518.6" stroke="#b5b2ae" stroke-width="0.6"/>
<line x1="1415.0" y1="488.1" x2="1465.0" y2="504.4" stroke="#b5b2ae" stroke-width="0.6"/>
<polygon points="1399.0,502.2 1465.0,523.8 1465.0,536.3 1399.0,514.7" fill="#aba8a4" stroke="#66635f" stroke-width="0.6" stroke-linejoin="round" />
<line x1="1401.0" y1="503.9" x2="1401.0" y2="514.4" stroke="#918e8a" stroke-width="0.4"/>
<line x1="1403.6" y1="504.7" x2="1403.6" y2="515.2" stroke="#918e8a" stroke-width="0.4"/>
<line x1="1406.2" y1="505.6" x2="1406.2" y2="516.1" stroke="#918e8a" stroke-width="0.4"/>
<line x1="1408.8" y1="506.4" x2="1408.8" y2="516.9" stroke="#918e8a" stroke-width="0.4"/>
<line x1="1411.4" y1="507.3" x2="1411.4" y2="517.8" stroke="#918e8a" stroke-width="0.4"/>
<line x1="1414.0" y1="508.1" x2="1414.0" y2="518.6" stroke="#918e8a" stroke-width="0.4"/>
<line x1="1416.6" y1="509.0" x2="1416.6" y2="519.5" stroke="#918e8a" stroke-width="0.4"/>
<line x1="1419.2" y1="509.8" x2="1419.2" y2="520.3" stroke="#918e8a" stroke-width="0.4"/>
<line x1="1421.8" y1="510.7" x2="1421.8" y2="521.2" stroke="#918e8a" stroke-width="0.4"/>
<line x1="1424.4" y1="511.5" x2="1424.4" y2="522.0" stroke="#918e8a" stroke-width="0.4"/>
<line x1="1427.0" y1="512.4" x2="1427.0" y2="522.9" stroke="#918e8a" stroke-width="0.4"/>
<line x1="1429.6" y1="513.2" x2="1429.6" y2="523.7" stroke="#918e8a" stroke-width="0.4"/>
<line x1="1432.2" y1="514.1" x2="1432.2" y2="524.6" stroke="#918e8a" stroke-width="0.4"/>
<line x1="1434.8" y1="514.9" x2="1434.8" y2="525.4" stroke="#918e8a" stroke-width="0.4"/>
<line x1="1437.4" y1="515.8" x2="1437.4" y2="526.3" stroke="#918e8a" stroke-width="0.4"/>
<line x1="1440.0" y1="516.6" x2="1440.0" y2="527.1" stroke="#918e8a" stroke-width="0.4"/>
<line x1="1442.6" y1="517.5" x2="1442.6" y2="528.0" stroke="#918e8a" stroke-width="0.4"/>
<line x1="1445.2" y1="518.3" x2="1445.2" y2="528.8" stroke="#918e8a" stroke-width="0.4"/>
<line x1="1447.8" y1="519.2" x2="1447.8" y2="529.7" stroke="#918e8a" stroke-width="0.4"/>
<line x1="1450.4" y1="520.0" x2="1450.4" y2="530.5" stroke="#918e8a" stroke-width="0.4"/>
<line x1="1453.0" y1="520.9" x2="1453.0" y2="531.4" stroke="#918e8a" stroke-width="0.4"/>
<line x1="1455.6" y1="521.7" x2="1455.6" y2="532.2" stroke="#918e8a" stroke-width="0.4"/>
<line x1="1458.2" y1="522.6" x2="1458.2" y2="533.1" stroke="#918e8a" stroke-width="0.4"/>
<line x1="1460.8" y1="523.4" x2="1460.8" y2="533.9" stroke="#918e8a" stroke-width="0.4"/>
<line x1="1463.4" y1="524.3" x2="1463.4" y2="534.8" stroke="#918e8a" stroke-width="0.4"/>
<polygon points="1399.0,514.7 1465.0,536.3 1465.0,540.3 1399.0,518.7" fill="#bdbab6" stroke="#66635f" stroke-width="0.6" stroke-linejoin="round" />
<polygon points="1399.0,518.2 1403.0,519.5 1403.0,541.9 1399.0,540.6" fill="#dad6d1" stroke="none" stroke-width="0.8" stroke-linejoin="round" />
<polygon points="1403.0,521.5 1415.0,525.5 1415.0,545.9 1403.0,541.9" fill="#dcd8d3" stroke="none" stroke-width="0.8" stroke-linejoin="round" />
<line x1="1415.0" y1="526.5" x2="1415.0" y2="545.9" stroke="#b5b2ae" stroke-width="0.6"/>
<line x1="1423.0" y1="529.1" x2="1423.0" y2="548.5" stroke="#b5b2ae" stroke-width="0.6"/>
<line x1="1445.0" y1="536.3" x2="1445.0" y2="555.7" stroke="#b5b2ae" stroke-width="0.6"/>
<line x1="1449.0" y1="537.6" x2="1449.0" y2="557.0" stroke="#b5b2ae" stroke-width="0.6"/>
<line x1="1415.0" y1="526.5" x2="1465.0" y2="542.8" stroke="#b5b2ae" stroke-width="0.6"/>
<polygon points="1399.0,540.6 1465.0,562.2 1465.0,574.7 1399.0,553.1" fill="#aba8a4" stroke="#66635f" stroke-width="0.6" stroke-linejoin="round" />
<line x1="1401.0" y1="542.3" x2="1401.0" y2="552.8" stroke="#918e8a" stroke-width="0.4"/>
<line x1="1403.6" y1="543.1" x2="1403.6" y2="553.6" stroke="#918e8a" stroke-width="0.4"/>
<line x1="1406.2" y1="544.0" x2="1406.2" y2="554.5" stroke="#918e8a" stroke-width="0.4"/>
<line x1="1408.8" y1="544.8" x2="1408.8" y2="555.3" stroke="#918e8a" stroke-width="0.4"/>
<line x1="1411.4" y1="545.7" x2="1411.4" y2="556.2" stroke="#918e8a" stroke-width="0.4"/>
<line x1="1414.0" y1="546.5" x2="1414.0" y2="557.0" stroke="#918e8a" stroke-width="0.4"/>
<line x1="1416.6" y1="547.4" x2="1416.6" y2="557.9" stroke="#918e8a" stroke-width="0.4"/>
<line x1="1419.2" y1="548.2" x2="1419.2" y2="558.7" stroke="#918e8a" stroke-width="0.4"/>
<line x1="1421.8" y1="549.1" x2="1421.8" y2="559.6" stroke="#918e8a" stroke-width="0.4"/>
<line x1="1424.4" y1="549.9" x2="1424.4" y2="560.4" stroke="#918e8a" stroke-width="0.4"/>
<line x1="1427.0" y1="550.8" x2="1427.0" y2="561.3" stroke="#918e8a" stroke-width="0.4"/>
<line x1="1429.6" y1="551.6" x2="1429.6" y2="562.1" stroke="#918e8a" stroke-width="0.4"/>
<line x1="1432.2" y1="552.5" x2="1432.2" y2="563.0" stroke="#918e8a" stroke-width="0.4"/>
<line x1="1434.8" y1="553.3" x2="1434.8" y2="563.8" stroke="#918e8a" stroke-width="0.4"/>
<line x1="1437.4" y1="554.2" x2="1437.4" y2="564.7" stroke="#918e8a" stroke-width="0.4"/>
<line x1="1440.0" y1="555.0" x2="1440.0" y2="565.5" stroke="#918e8a" stroke-width="0.4"/>
<line x1="1442.6" y1="555.9" x2="1442.6" y2="566.4" stroke="#918e8a" stroke-width="0.4"/>
<line x1="1445.2" y1="556.7" x2="1445.2" y2="567.2" stroke="#918e8a" stroke-width="0.4"/>
<line x1="1447.8" y1="557.6" x2="1447.8" y2="568.1" stroke="#918e8a" stroke-width="0.4"/>
<line x1="1450.4" y1="558.4" x2="1450.4" y2="568.9" stroke="#918e8a" stroke-width="0.4"/>
<line x1="1453.0" y1="559.3" x2="1453.0" y2="569.8" stroke="#918e8a" stroke-width="0.4"/>
<line x1="1455.6" y1="560.1" x2="1455.6" y2="570.6" stroke="#918e8a" stroke-width="0.4"/>
<line x1="1458.2" y1="561.0" x2="1458.2" y2="571.5" stroke="#918e8a" stroke-width="0.4"/>
<line x1="1460.8" y1="561.8" x2="1460.8" y2="572.3" stroke="#918e8a" stroke-width="0.4"/>
<line x1="1463.4" y1="562.7" x2="1463.4" y2="573.2" stroke="#918e8a" stroke-width="0.4"/>
<polygon points="1399.0,553.1 1465.0,574.7 1465.0,578.7 1399.0,557.1" fill="#bdbab6" stroke="#66635f" stroke-width="0.6" stroke-linejoin="round" />
<polygon points="1399.0,556.6 1403.0,557.9 1403.0,580.3 1399.0,579.0" fill="#dad6d1" stroke="none" stroke-width="0.8" stroke-linejoin="round" />
<polygon points="1403.0,559.9 1415.0,563.9 1415.0,584.3 1403.0,580.3" fill="#dcd8d3" stroke="none" stroke-width="0.8" stroke-linejoin="round" />
<line x1="1415.0" y1="564.9" x2="1415.0" y2="584.3" stroke="#b5b2ae" stroke-width="0.6"/>
<line x1="1423.0" y1="567.5" x2="1423.0" y2="586.9" stroke="#b5b2ae" stroke-width="0.6"/>
<line x1="1445.0" y1="574.7" x2="1445.0" y2="594.1" stroke="#b5b2ae" stroke-width="0.6"/>
<line x1="1449.0" y1="576.0" x2="1449.0" y2="595.4" stroke="#b5b2ae" stroke-width="0.6"/>
<line x1="1415.0" y1="564.9" x2="1465.0" y2="581.2" stroke="#b5b2ae" stroke-width="0.6"/>
<polygon points="1399.0,579.0 1465.0,600.6 1465.0,613.1 1399.0,591.5" fill="#aba8a4" stroke="#66635f" stroke-width="0.6" stroke-linejoin="round" />
<line x1="1401.0" y1="580.7" x2="1401.0" y2="591.2" stroke="#918e8a" stroke-width="0.4"/>
<line x1="1403.6" y1="581.5" x2="1403.6" y2="592.0" stroke="#918e8a" stroke-width="0.4"/>
<line x1="1406.2" y1="582.4" x2="1406.2" y2="592.9" stroke="#918e8a" stroke-width="0.4"/>
<line x1="1408.8" y1="583.2" x2="1408.8" y2="593.7" stroke="#918e8a" stroke-width="0.4"/>
<line x1="1411.4" y1="584.1" x2="1411.4" y2="594.6" stroke="#918e8a" stroke-width="0.4"/>
<line x1="1414.0" y1="584.9" x2="1414.0" y2="595.4" stroke="#918e8a" stroke-width="0.4"/>
<line x1="1416.6" y1="585.8" x2="1416.6" y2="596.3" stroke="#918e8a" stroke-width="0.4"/>
<line x1="1419.2" y1="586.6" x2="1419.2" y2="597.1" stroke="#918e8a" stroke-width="0.4"/>
<line x1="1421.8" y1="587.5" x2="1421.8" y2="598.0" stroke="#918e8a" stroke-width="0.4"/>
<line x1="1424.4" y1="588.3" x2="1424.4" y2="598.8" stroke="#918e8a" stroke-width="0.4"/>
<line x1="1427.0" y1="589.2" x2="1427.0" y2="599.7" stroke="#918e8a" stroke-width="0.4"/>
<line x1="1429.6" y1="590.0" x2="1429.6" y2="600.5" stroke="#918e8a" stroke-width="0.4"/>
<line x1="1432.2" y1="590.9" x2="1432.2" y2="601.4" stroke="#918e8a" stroke-width="0.4"/>
<line x1="1434.8" y1="591.7" x2="1434.8" y2="602.2" stroke="#918e8a" stroke-width="0.4"/>
<line x1="1437.4" y1="592.6" x2="1437.4" y2="603.1" stroke="#918e8a" stroke-width="0.4"/>
<line x1="1440.0" y1="593.4" x2="1440.0" y2="603.9" stroke="#918e8a" stroke-width="0.4"/>
<line x1="1442.6" y1="594.3" x2="1442.6" y2="604.8" stroke="#918e8a" stroke-width="0.4"/>
<line x1="1445.2" y1="595.1" x2="1445.2" y2="605.6" stroke="#918e8a" stroke-width="0.4"/>
<line x1="1447.8" y1="596.0" x2="1447.8" y2="606.5" stroke="#918e8a" stroke-width="0.4"/>
<line x1="1450.4" y1="596.8" x2="1450.4" y2="607.3" stroke="#918e8a" stroke-width="0.4"/>
<line x1="1453.0" y1="597.7" x2="1453.0" y2="608.2" stroke="#918e8a" stroke-width="0.4"/>
<line x1="1455.6" y1="598.5" x2="1455.6" y2="609.0" stroke="#918e8a" stroke-width="0.4"/>
<line x1="1458.2" y1="599.4" x2="1458.2" y2="609.9" stroke="#918e8a" stroke-width="0.4"/>
<line x1="1460.8" y1="600.2" x2="1460.8" y2="610.7" stroke="#918e8a" stroke-width="0.4"/>
<line x1="1463.4" y1="601.1" x2="1463.4" y2="611.6" stroke="#918e8a" stroke-width="0.4"/>
<polygon points="1399.0,591.5 1465.0,613.1 1465.0,617.1 1399.0,595.5" fill="#bdbab6" stroke="#66635f" stroke-width="0.6" stroke-linejoin="round" />
<line x1="1343.5" y1="418.7" x2="1343.5" y2="629.7" stroke="#3a3836" stroke-width="1"/>
<polygon points="1357.0,431.1 1377.0,437.6 1377.0,464.6 1357.0,458.1" fill="#f8f5f0" stroke="#7c7976" stroke-width="0.8" stroke-linejoin="round" />
<polygon points="1359.0,433.8 1375.0,439.0 1375.0,462.0 1359.0,456.8" fill="none" stroke="#a7a4a0" stroke-width="0.6" stroke-linejoin="round" />
<polygon points="1357.0,469.5 1377.0,476.0 1377.0,503.0 1357.0,496.5" fill="#f8f5f0" stroke="#7c7976" stroke-width="0.8" stroke-linejoin="round" />
<polygon points="1359.0,472.2 1375.0,477.4 1375.0,500.4 1359.0,495.2" fill="none" stroke="#a7a4a0" stroke-width="0.6" stroke-linejoin="round" />
<polygon points="1357.0,507.9 1377.0,514.4 1377.0,541.4 1357.0,534.9" fill="#f8f5f0" stroke="#7c7976" stroke-width="0.8" stroke-linejoin="round" />
<polygon points="1359.0,510.6 1375.0,515.8 1375.0,538.8 1359.0,533.6" fill="none" stroke="#a7a4a0" stroke-width="0.6" stroke-linejoin="round" />
<polygon points="1357.0,546.3 1377.0,552.8 1377.0,579.8 1357.0,573.3" fill="#f8f5f0" stroke="#7c7976" stroke-width="0.8" stroke-linejoin="round" />
<polygon points="1359.0,549.0 1375.0,554.2 1375.0,577.2 1359.0,572.0" fill="none" stroke="#a7a4a0" stroke-width="0.6" stroke-linejoin="round" />
<polygon points="1344.5,585.0 1381.5,597.1 1381.5,641.1 1344.5,626.0" fill="#e8e4df" stroke="#4a4845" stroke-width="0.7" stroke-linejoin="round" />
<polygon points="1344.5,587.0 1365.5,593.9 1365.5,615.9 1344.5,609.0" fill="#dcd8d3" stroke="#8a8784" stroke-width="0.6" stroke-linejoin="round" />
<polygon points="1368.0,598.7 1380.0,602.6 1380.0,640.6 1368.0,636.7" fill="#f3efea" stroke="#8a8784" stroke-width="0.6" stroke-linejoin="round" />
<polygon points="1423.0,618.7 1451.0,627.8 1451.0,657.8 1423.0,648.7" fill="#f8f5f0" stroke="#7c7976" stroke-width="0.8" stroke-linejoin="round" />
<polygon points="1425.0,621.3 1449.0,629.2 1449.0,655.2 1425.0,647.3" fill="none" stroke="#a7a4a0" stroke-width="0.6" stroke-linejoin="round" />
<polygon points="1465.0,463.4 1482.0,457.8 1482.0,606.3 1465.0,611.9" fill="#c4c0bb" stroke="#55524f" stroke-width="0.6" stroke-linejoin="round" />
<polygon points="1465.0,485.4 1482.0,479.8 1482.0,496.3 1465.0,501.9" fill="#aba8a4" stroke="#66635f" stroke-width="0.6" stroke-linejoin="round" />
<line x1="1467.0" y1="485.7" x2="1467.0" y2="496.7" stroke="#918e8a" stroke-width="0.4"/>
<line x1="1469.6" y1="484.9" x2="1469.6" y2="495.9" stroke="#918e8a" stroke-width="0.4"/>
<line x1="1472.2" y1="484.0" x2="1472.2" y2="495.0" stroke="#918e8a" stroke-width="0.4"/>
<line x1="1474.8" y1="483.2" x2="1474.8" y2="494.2" stroke="#918e8a" stroke-width="0.4"/>
<line x1="1477.4" y1="482.3" x2="1477.4" y2="493.3" stroke="#918e8a" stroke-width="0.4"/>
<line x1="1480.0" y1="481.5" x2="1480.0" y2="492.5" stroke="#918e8a" stroke-width="0.4"/>
<polygon points="1465.0,469.4 1482.0,463.8 1482.0,479.8 1465.0,485.4" fill="#bdb9b4" stroke="none" stroke-width="0.8" stroke-linejoin="round" />
<polygon points="1465.0,523.8 1482.0,518.2 1482.0,534.7 1465.0,540.3" fill="#aba8a4" stroke="#66635f" stroke-width="0.6" stroke-linejoin="round" />
<line x1="1467.0" y1="524.1" x2="1467.0" y2="535.1" stroke="#918e8a" stroke-width="0.4"/>
<line x1="1469.6" y1="523.3" x2="1469.6" y2="534.3" stroke="#918e8a" stroke-width="0.4"/>
<line x1="1472.2" y1="522.4" x2="1472.2" y2="533.4" stroke="#918e8a" stroke-width="0.4"/>
<line x1="1474.8" y1="521.6" x2="1474.8" y2="532.6" stroke="#918e8a" stroke-width="0.4"/>
<line x1="1477.4" y1="520.7" x2="1477.4" y2="531.7" stroke="#918e8a" stroke-width="0.4"/>
<line x1="1480.0" y1="519.9" x2="1480.0" y2="530.9" stroke="#918e8a" stroke-width="0.4"/>
<polygon points="1465.0,507.8 1482.0,502.2 1482.0,518.2 1465.0,523.8" fill="#bdb9b4" stroke="none" stroke-width="0.8" stroke-linejoin="round" />
<polygon points="1465.0,562.2 1482.0,556.6 1482.0,573.1 1465.0,578.7" fill="#aba8a4" stroke="#66635f" stroke-width="0.6" stroke-linejoin="round" />
<line x1="1467.0" y1="562.5" x2="1467.0" y2="573.5" stroke="#918e8a" stroke-width="0.4"/>
<line x1="1469.6" y1="561.7" x2="1469.6" y2="572.7" stroke="#918e8a" stroke-width="0.4"/>
<line x1="1472.2" y1="560.8" x2="1472.2" y2="571.8" stroke="#918e8a" stroke-width="0.4"/>
<line x1="1474.8" y1="560.0" x2="1474.8" y2="571.0" stroke="#918e8a" stroke-width="0.4"/>
<line x1="1477.4" y1="559.1" x2="1477.4" y2="570.1" stroke="#918e8a" stroke-width="0.4"/>
<line x1="1480.0" y1="558.3" x2="1480.0" y2="569.3" stroke="#918e8a" stroke-width="0.4"/>
<polygon points="1465.0,546.2 1482.0,540.6 1482.0,556.6 1465.0,562.2" fill="#bdb9b4" stroke="none" stroke-width="0.8" stroke-linejoin="round" />
<polygon points="1465.0,600.6 1482.0,595.0 1482.0,611.5 1465.0,617.1" fill="#aba8a4" stroke="#66635f" stroke-width="0.6" stroke-linejoin="round" />
<line x1="1467.0" y1="600.9" x2="1467.0" y2="611.9" stroke="#918e8a" stroke-width="0.4"/>
<line x1="1469.6" y1="600.1" x2="1469.6" y2="611.1" stroke="#918e8a" stroke-width="0.4"/>
<line x1="1472.2" y1="599.2" x2="1472.2" y2="610.2" stroke="#918e8a" stroke-width="0.4"/>
<line x1="1474.8" y1="598.4" x2="1474.8" y2="609.4" stroke="#918e8a" stroke-width="0.4"/>
<line x1="1477.4" y1="597.5" x2="1477.4" y2="608.5" stroke="#918e8a" stroke-width="0.4"/>
<line x1="1480.0" y1="596.7" x2="1480.0" y2="607.7" stroke="#918e8a" stroke-width="0.4"/>
<polygon points="1465.0,584.6 1482.0,579.0 1482.0,595.0 1465.0,600.6" fill="#bdb9b4" stroke="none" stroke-width="0.8" stroke-linejoin="round" />
<line x1="1482.0" y1="452.8" x2="1482.0" y2="606.3" stroke="#3a3836" stroke-width="0.9"/>
<line x1="1483.0" y1="490.9" x2="1597.0" y2="453.6" stroke="#55524f" stroke-width="0.8"/>
<line x1="1483.0" y1="529.3" x2="1597.0" y2="492.0" stroke="#55524f" stroke-width="0.8"/>
<line x1="1483.0" y1="567.7" x2="1597.0" y2="530.4" stroke="#55524f" stroke-width="0.8"/>
<line x1="1483.0" y1="606.1" x2="1597.0" y2="568.8" stroke="#55524f" stroke-width="0.8"/>
<polygon points="1501.0,451.6 1510.0,448.7 1510.0,473.7 1501.0,476.6" fill="#e9e4de" stroke="#6f6c69" stroke-width="0.7" stroke-linejoin="round" />
<line x1="1503.0" y1="452.0" x2="1503.0" y2="475.0" stroke="#b1aeaa" stroke-width="0.5"/>
<polygon points="1520.0,445.4 1529.0,442.5 1529.0,467.5 1520.0,470.4" fill="#e9e4de" stroke="#6f6c69" stroke-width="0.7" stroke-linejoin="round" />
<line x1="1522.0" y1="445.8" x2="1522.0" y2="468.8" stroke="#b1aeaa" stroke-width="0.5"/>
<polygon points="1551.0,435.3 1558.0,433.0 1558.0,450.0 1551.0,452.3" fill="#e9e4de" stroke="#6f6c69" stroke-width="0.7" stroke-linejoin="round" />
<line x1="1553.0" y1="435.6" x2="1553.0" y2="450.6" stroke="#b1aeaa" stroke-width="0.5"/>
<polygon points="1583.0,423.8 1592.0,420.9 1592.0,446.4 1583.0,449.3" fill="#e9e4de" stroke="#6f6c69" stroke-width="0.7" stroke-linejoin="round" />
<line x1="1585.0" y1="424.2" x2="1585.0" y2="447.7" stroke="#b1aeaa" stroke-width="0.5"/>
<polygon points="1501.0,490.0 1510.0,487.1 1510.0,512.1 1501.0,515.0" fill="#e9e4de" stroke="#6f6c69" stroke-width="0.7" stroke-linejoin="round" />
<line x1="1503.0" y1="490.4" x2="1503.0" y2="513.4" stroke="#b1aeaa" stroke-width="0.5"/>
<polygon points="1520.0,483.8 1529.0,480.9 1529.0,505.9 1520.0,508.8" fill="#e9e4de" stroke="#6f6c69" stroke-width="0.7" stroke-linejoin="round" />
<line x1="1522.0" y1="484.2" x2="1522.0" y2="507.2" stroke="#b1aeaa" stroke-width="0.5"/>
<polygon points="1551.0,473.7 1558.0,471.4 1558.0,488.4 1551.0,490.7" fill="#e9e4de" stroke="#6f6c69" stroke-width="0.7" stroke-linejoin="round" />
<line x1="1553.0" y1="474.0" x2="1553.0" y2="489.0" stroke="#b1aeaa" stroke-width="0.5"/>
<polygon points="1583.0,462.2 1592.0,459.3 1592.0,484.8 1583.0,487.7" fill="#e9e4de" stroke="#6f6c69" stroke-width="0.7" stroke-linejoin="round" />
<line x1="1585.0" y1="462.6" x2="1585.0" y2="486.1" stroke="#b1aeaa" stroke-width="0.5"/>
<polygon points="1501.0,528.4 1510.0,525.5 1510.0,550.5 1501.0,553.4" fill="#e9e4de" stroke="#6f6c69" stroke-width="0.7" stroke-linejoin="round" />
<line x1="1503.0" y1="528.8" x2="1503.0" y2="551.8" stroke="#b1aeaa" stroke-width="0.5"/>
<polygon points="1520.0,522.2 1529.0,519.3 1529.0,544.3 1520.0,547.2" fill="#e9e4de" stroke="#6f6c69" stroke-width="0.7" stroke-linejoin="round" />
<line x1="1522.0" y1="522.6" x2="1522.0" y2="545.6" stroke="#b1aeaa" stroke-width="0.5"/>
<polygon points="1551.0,512.1 1558.0,509.8 1558.0,526.8 1551.0,529.1" fill="#e9e4de" stroke="#6f6c69" stroke-width="0.7" stroke-linejoin="round" />
<line x1="1553.0" y1="512.4" x2="1553.0" y2="527.4" stroke="#b1aeaa" stroke-width="0.5"/>
<polygon points="1583.0,500.6 1592.0,497.7 1592.0,523.2 1583.0,526.1" fill="#e9e4de" stroke="#6f6c69" stroke-width="0.7" stroke-linejoin="round" />
<line x1="1585.0" y1="501.0" x2="1585.0" y2="524.5" stroke="#b1aeaa" stroke-width="0.5"/>
<polygon points="1501.0,566.8 1510.0,563.9 1510.0,588.9 1501.0,591.8" fill="#e9e4de" stroke="#6f6c69" stroke-width="0.7" stroke-linejoin="round" />
<line x1="1503.0" y1="567.2" x2="1503.0" y2="590.2" stroke="#b1aeaa" stroke-width="0.5"/>
<polygon points="1520.0,560.6 1529.0,557.7 1529.0,582.7 1520.0,585.6" fill="#e9e4de" stroke="#6f6c69" stroke-width="0.7" stroke-linejoin="round" />
<line x1="1522.0" y1="561.0" x2="1522.0" y2="584.0" stroke="#b1aeaa" stroke-width="0.5"/>
<polygon points="1551.0,550.5 1558.0,548.2 1558.0,565.2 1551.0,567.5" fill="#e9e4de" stroke="#6f6c69" stroke-width="0.7" stroke-linejoin="round" />
<line x1="1553.0" y1="550.8" x2="1553.0" y2="565.8" stroke="#b1aeaa" stroke-width="0.5"/>
<polygon points="1583.0,539.0 1592.0,536.1 1592.0,561.6 1583.0,564.5" fill="#e9e4de" stroke="#6f6c69" stroke-width="0.7" stroke-linejoin="round" />
<line x1="1585.0" y1="539.4" x2="1585.0" y2="562.9" stroke="#b1aeaa" stroke-width="0.5"/>
<polygon points="1478.0,628.1 1505.5,619.2 1505.5,647.7 1478.0,656.6" fill="#e6e1db" stroke="#6f6c69" stroke-width="0.8" stroke-linejoin="round" />
<polygon points="1480.0,629.5 1503.5,621.8 1503.5,646.3 1480.0,654.0" fill="none" stroke="#b1aeaa" stroke-width="0.6" stroke-linejoin="round" />
<polygon points="1556.0,601.1 1583.0,592.3 1583.0,621.8 1556.0,630.6" fill="#e6e1db" stroke="#6f6c69" stroke-width="0.8" stroke-linejoin="round" />
<polygon points="1558.0,602.5 1581.0,595.0 1581.0,620.5 1558.0,628.0" fill="none" stroke="#b1aeaa" stroke-width="0.6" stroke-linejoin="round" />
<polygon points="1519.6,606.0 1542.5,599.4 1542.5,655.1 1519.6,662.2" fill="#f8f5f0" stroke="#4a4845" stroke-width="0.8" stroke-linejoin="round" />
<line x1="1521.0" y1="630.1" x2="1541.0" y2="625.5" stroke="#a9a6a2" stroke-width="0.6"/>
<line x1="1521.0" y1="634.1" x2="1541.0" y2="629.5" stroke="#a9a6a2" stroke-width="0.6"/>
<line x1="1521.0" y1="638.1" x2="1541.0" y2="633.5" stroke="#a9a6a2" stroke-width="0.6"/>
<line x1="1521.0" y1="642.1" x2="1541.0" y2="637.5" stroke="#a9a6a2" stroke-width="0.6"/>
<line x1="1521.0" y1="646.1" x2="1541.0" y2="641.5" stroke="#a9a6a2" stroke-width="0.6"/>
<line x1="1521.0" y1="650.1" x2="1541.0" y2="645.5" stroke="#a9a6a2" stroke-width="0.6"/>
<line x1="1521.0" y1="654.1" x2="1541.0" y2="649.5" stroke="#a9a6a2" stroke-width="0.6"/>
<line x1="1521.0" y1="658.1" x2="1541.0" y2="653.5" stroke="#a9a6a2" stroke-width="0.6"/>
<line x1="1465.0" y1="611.9" x2="1465.0" y2="682.4" stroke="#4a4845" stroke-width="1"/>
<line x1="1597.0" y1="415.2" x2="1597.0" y2="568.7" stroke="#4a4845" stroke-width="0.9"/>
<polygon points="1401.0,331.0 1253.0,382.0 1465.0,449.0 1615.0,401.0" fill="#f8f4ee" stroke="#4a4845" stroke-width="0.9" stroke-linejoin="round" />
<polygon points="1253.0,382.0 1465.0,449.0 1465.0,458.0 1256.0,390.0" fill="#f1ede7" stroke="#4a4845" stroke-width="0.8" stroke-linejoin="round" />
<polygon points="1465.0,449.0 1615.0,401.0 1615.0,408.0 1465.0,458.0" fill="#ebe6e0" stroke="#4a4845" stroke-width="0.8" stroke-linejoin="round" />
<line x1="1255.0" y1="386.0" x2="1465.0" y2="453.5" stroke="#9c9994" stroke-width="0.6"/>
<line x1="1465.0" y1="453.5" x2="1615.0" y2="404.5" stroke="#9c9994" stroke-width="0.6"/><polygon points="1399.0,476.3 1465.0,497.9 1597.0,454.7 1597.0,492.2 1465.0,535.4 1399.0,513.8" fill="rgba(176,120,70,0.10)" stroke="#b08358" stroke-width="1.2" stroke-linejoin="round" />
<text x="1487" y="495.5" text-anchor="middle" font-family="Liberation Sans" font-weight="700" font-size="17" fill="#fff" stroke="#111" stroke-width="3" paint-order="stroke" letter-spacing="-1">107</text></svg>
<div style="position:absolute;left:1542px;top:291px;width:320px;height:192px;background:#fff;border:1px solid #cbd5e1;box-shadow:0 10px 15px -3px rgba(0,0,0,.12),0 4px 6px -4px rgba(0,0,0,.1)"></div>
<div class="t" style="left:1559.5px;top:313.19px;font-size:17.5px;line-height:17.5px;font-weight:700;color:#0f172a;letter-spacing:0.359px;">Wohnung 107</div>
<div style="position:absolute;left:1559px;top:344px;width:286px;height:1px;background:#e2e8f0"></div>
<div class="t" style="left:1559.5px;top:356.15px;font-size:14px;line-height:14px;font-weight:400;color:#475569;letter-spacing:0.531px;">Stockwerk: <span style="color:#0f172a">3</span></div>
<div class="t" style="left:1706.5px;top:356.15px;font-size:14px;line-height:14px;font-weight:400;color:#475569;letter-spacing:0.373px;">Zimmer: <span style="color:#0f172a">2</span></div>
<div class="t" style="left:1559.5px;top:383.55px;font-size:14px;line-height:14px;font-weight:400;color:#475569;letter-spacing:0.523px;">Wohnfläche (m²): <span style="color:#0f172a">50</span></div>
<div class="t" style="left:1559.5px;top:403.35px;font-size:14px;line-height:14px;font-weight:400;color:#0f172a;">m²</div>
<div style="position:absolute;left:1559px;top:429px;width:286px;height:1px;background:#e2e8f0"></div>
<div class="t" style="left:1559.5px;top:441.76px;font-size:18px;line-height:18px;font-weight:700;color:#0f172a;letter-spacing:0.966px;">CHF 750'000</div>
<div style="position:absolute;left:1759px;top:446px;width:12px;height:12px;background:#10b981;border-radius:50%"></div>
<div class="t" style="left:1779px;top:445.15px;font-size:14px;line-height:14px;font-weight:400;color:#475569;letter-spacing:0.66px;">Verfügbar</div>
<div style="position:absolute;left:1001px;top:842px;width:912px;height:159px;background:#f8f9fa"></div>
<div class="t" style="left:1025px;top:862.17px;font-size:20px;line-height:20px;font-weight:700;color:#0f172a;letter-spacing:0.141px;">Urban Heights Main Building</div>
<svg style="position:absolute;left:1873px;top:864px;" width="16" height="16" viewBox="0 0 24 24" fill="none" stroke="#0f172a" stroke-width="2" stroke-linecap="round" stroke-linejoin="round"><path d="m18 15-6-6-6 6"/></svg>
<div class="t" style="left:1045px;top:916.42px;font-size:12.5px;line-height:12.5px;font-weight:400;color:#52525b;letter-spacing:0.125px;-webkit-text-stroke:0.35px currentColor;">Whg Nr</div>
<div class="t" style="left:1108px;top:916.42px;font-size:12.5px;line-height:12.5px;font-weight:400;color:#52525b;letter-spacing:0.543px;-webkit-text-stroke:0.35px currentColor;">Stockwerk</div>
<div class="t" style="left:1222px;top:916.42px;font-size:12.5px;line-height:12.5px;font-weight:400;color:#52525b;letter-spacing:0.328px;-webkit-text-stroke:0.35px currentColor;">Zimmer</div>
<div class="t" style="left:1337px;top:916.42px;font-size:12.5px;line-height:12.5px;font-weight:400;color:#52525b;letter-spacing:0.416px;-webkit-text-stroke:0.35px currentColor;">Wohnfläche (m²)</div>
<div class="t" style="left:1491px;top:916.42px;font-size:12.5px;line-height:12.5px;font-weight:400;color:#52525b;letter-spacing:0.381px;-webkit-text-stroke:0.35px currentColor;">Außenfläche</div>
<div class="t" style="left:1642px;top:916.42px;font-size:12.5px;line-height:12.5px;font-weight:400;color:#52525b;letter-spacing:0.523px;-webkit-text-stroke:0.35px currentColor;">Kaufpreis</div>
<div class="t" style="left:1758px;top:916.42px;font-size:12.5px;line-height:12.5px;font-weight:400;color:#52525b;letter-spacing:0.312px;-webkit-text-stroke:0.35px currentColor;">Status</div>
<div class="t" style="left:1836px;top:916.42px;font-size:12.5px;line-height:12.5px;font-weight:400;color:#52525b;letter-spacing:-1.0px;-webkit-text-stroke:0.35px currentColor;">PDF</div>
<div style="position:absolute;left:1025px;top:942px;width:862px;height:1px;background:#e5e7eb"></div>
<div style="position:absolute;left:1048px;top:960px;width:37px;height:25px;background:#e5e7eb;border-radius:4px"></div>
<div class="t" style="left:1055px;top:965.95px;font-size:14px;line-height:14px;font-weight:700;color:#0f172a;letter-spacing:-0.4px;">101</div>
<div class="t" style="left:1128.6px;top:965.75px;font-size:14px;line-height:14px;font-weight:400;color:#0f172a;">EG</div>
<div class="t" style="left:1240px;top:965.75px;font-size:14px;line-height:14px;font-weight:400;color:#0f172a;">4</div>
<div class="t" style="left:1366px;top:965.75px;font-size:14px;line-height:14px;font-weight:400;color:#0f172a;letter-spacing:1.051px;">50 m²</div>
<div class="t" style="left:1525px;top:965.75px;font-size:14px;line-height:14px;font-weight:400;color:#0f172a;">-</div>
<div class="t" style="left:1624px;top:965.33px;font-size:14.5px;line-height:14.5px;font-weight:700;color:#0f172a;letter-spacing:0.633px;">CHF 750'000</div>
<div style="position:absolute;left:1771px;top:967.5px;width:12px;height:12px;background:#10b981;border-radius:50%"></div>
</body></html>
